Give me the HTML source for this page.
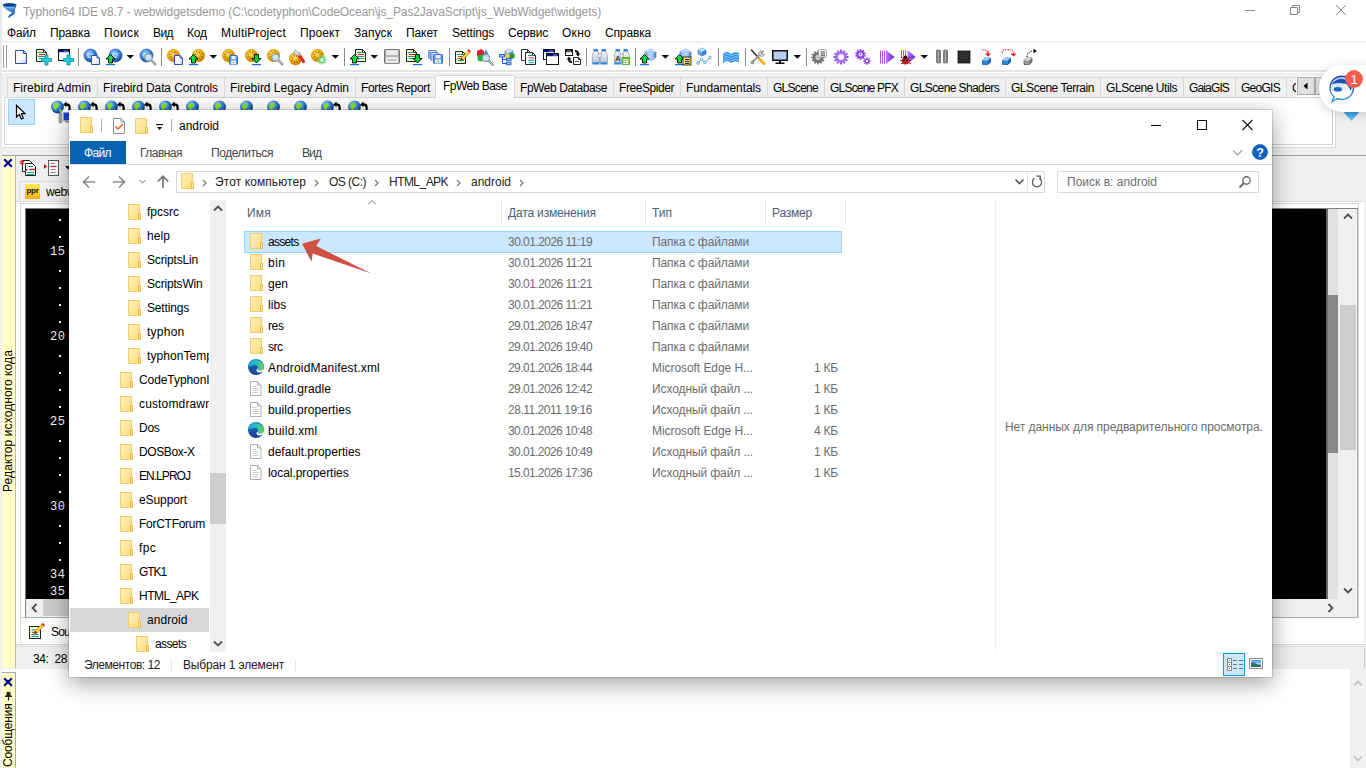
<!DOCTYPE html>
<html lang="ru"><head><meta charset="utf-8"><title>Typhon64 IDE</title>
<style>
html,body{margin:0;padding:0}
body{width:1366px;height:768px;overflow:hidden;position:relative;background:#f0f0f0;font-family:'Liberation Sans', sans-serif;font-size:12px}
div,span.t,svg{position:absolute;box-sizing:border-box}
span.t{white-space:pre}

</style></head><body>
<svg style="left:0;top:0" width="0" height="0"><defs><linearGradient id="fg" x1="0" y1="0" x2="1" y2="1"><stop offset="0" stop-color="#fff0be"/><stop offset="1" stop-color="#ffdc7c"/></linearGradient></defs><defs><linearGradient id="eg1" x1="0" y1="0" x2="1" y2="0"><stop offset="0" stop-color="#1fa0e4"/><stop offset=".55" stop-color="#2bc3b4"/><stop offset="1" stop-color="#6ad34a"/></linearGradient><linearGradient id="eg2" x1="0" y1="0" x2="0" y2="1"><stop offset="0" stop-color="#1b7fd4"/><stop offset="1" stop-color="#1a3f8c"/></linearGradient></defs></svg>
<div style="left:0px;top:0px;width:1366px;height:41px;background:#fff;"></div>
<div style="left:0px;top:41px;width:1366px;height:2px;background:#f0f0f0;"></div>
<div style="left:0px;top:43px;width:1366px;height:27px;background:#fff;"></div>
<div style="left:0px;top:70px;width:1366px;height:2px;background:#e3e3e3;"></div>
<div style="left:0px;top:72px;width:1366px;height:1px;background:#fff;"></div>
<div style="left:0px;top:0px;width:2px;height:155px;background:#e9e9e9;"></div>
<svg style="left:0;top:0" width="20" height="21" viewBox="0 0 20 21"><defs><linearGradient id="tw" x1="0" y1="0" x2="0" y2="1"><stop offset="0" stop-color="#0f4f9c"/><stop offset=".3" stop-color="#3f8ad8"/><stop offset="1" stop-color="#1a5fb4"/></linearGradient></defs><path d="M2.500 4.600Q9.500 1.800 16.500 4.600Q16.300 7.500 14.800 9.800Q15.500 12.500 14.200 14.500Q11 15.500 8.800 18Q7.300 16 10.500 14.300Q12.800 13.300 11 12Q6.500 10.300 3.800 7.200Z" fill="url(#tw)"/><ellipse cx="9.500" cy="4.800" rx="6.800" ry="1.500" fill="#0a3f8a"/><path d="M4.500 7.500h9.500M5.500 9h8" stroke="#9cc8f4" stroke-width=".6"/></svg>
<svg style="left:1240px;top:0" width="120" height="22" viewBox="1240 0 120 22"><g stroke="#8a8a8a" stroke-width="1" fill="none"><path d="M1245 10.500h10"/><path d="M1290.500 7.500h7v7h-7zM1292.500 7.500v-2h7v7h-2"/><path d="M1336 5l10 10M1346 5l-10 10"/></g></svg>
<div style="left:3px;top:45px;width:1px;height:23px;background:#a0a0a0;"></div>
<div style="left:6px;top:45px;width:1px;height:23px;background:#a0a0a0;"></div>
<svg style="left:0;top:44px" width="1060" height="26" viewBox="0 44 1060 26"><defs>
<radialGradient id="gB" cx="40%" cy="35%" r="65%"><stop offset="0" stop-color="#a9d6ff"/><stop offset=".55" stop-color="#3f8de0"/><stop offset="1" stop-color="#123f9c"/></radialGradient>
<radialGradient id="gY" cx="40%" cy="35%" r="65%"><stop offset="0" stop-color="#ffe88a"/><stop offset=".5" stop-color="#f9b90c"/><stop offset="1" stop-color="#c47e00"/></radialGradient>
<linearGradient id="gD" x1="0" y1="0" x2="1" y2="1"><stop offset="0" stop-color="#fff"/><stop offset=".6" stop-color="#f4f8ff"/><stop offset="1" stop-color="#b9cdf0"/></linearGradient>
<linearGradient id="gP" x1="0" y1="0" x2="1" y2="0"><stop offset="0" stop-color="#b680fa"/><stop offset="1" stop-color="#6a14d0"/></linearGradient>
<radialGradient id="gPg" cx="50%" cy="50%" r="60%"><stop offset="0" stop-color="#d9bdff"/><stop offset="1" stop-color="#8b45e6"/></radialGradient>
<linearGradient id="gG" x1="0" y1="0" x2="1" y2="0"><stop offset="0" stop-color="#666"/><stop offset=".5" stop-color="#a8a8a8"/><stop offset="1" stop-color="#555"/></linearGradient>
<linearGradient id="gC" x1="0" y1="0" x2="1" y2="1"><stop offset="0" stop-color="#d6ecff"/><stop offset="1" stop-color="#6aa2e8"/></linearGradient>
<linearGradient id="gBin" x1="0" y1="0" x2="0" y2="1"><stop offset="0" stop-color="#f4f7fb"/><stop offset=".6" stop-color="#d4dce8"/><stop offset="1" stop-color="#b8c4d4"/></linearGradient>
</defs><g transform="translate(14 49)"><path d="M1.5 1.5h8l3 3v10h-11z" fill="url(#gD)" stroke="#2a4fb8" stroke-width="1"/><path d="M9.5 1.5v3h3" fill="none" stroke="#2a4fb8" stroke-width="1"/></g><g transform="translate(36 49)"><path d="M0.5 0.5h7l3 3v9h-10z" fill="#fbf6cf" stroke="#222" stroke-width="1"/><path d="M7.5 0.5v3h3" fill="none" stroke="#222" stroke-width="1"/><rect x="2" y="3" width="7" height="1" fill="#159a9a"/><rect x="3" y="5" width="6" height="1" fill="#e02020"/><rect x="2" y="7" width="7" height="1" fill="#159a9a"/><rect x="3" y="9" width="6" height="1" fill="#159a9a"/><path d="M9.0 6h3v3.500h3.500v3h-3.500v3.500h-3v-3.500h-3.500v-3h3.500z" fill="#1fd0dc" stroke="#128a9a" stroke-width=".8"/></g><g transform="translate(58 49)"><rect x="0.5" y="0.5" width="11" height="11" fill="#fff" stroke="#111"/><rect x="1" y="1" width="10" height="2.2" fill="#10108a"/><rect x="8.5" y="1.6" width="1" height="1" fill="#fff"/><rect x="6.5" y="1.6" width="1" height="1" fill="#fff"/><path d="M9.0 6h3v3.500h3.500v3h-3.500v3.500h-3v-3.500h-3.500v-3h3.500z" fill="#1fd0dc" stroke="#128a9a" stroke-width=".8"/></g><rect x="78" y="48" width="1" height="18" fill="#8c8c8c"/><g transform="translate(84 49)"><circle cx="6.5" cy="6.5" r="6.5" fill="url(#gB)" stroke="#123f9c" stroke-width=".6"/><path d="M4.3 4.0q-1.5 4 1.5 4.5q3-.5 2-4.5" fill="none" stroke="#e8f4ff" stroke-width="1.1" opacity=".85"/><path d="M7.5 6.5h5.5l2.5 2.5v6.5h-8z" fill="url(#gD)" stroke="#2a4fb8" stroke-width="1"/><path d="M13.0 6.5v2.5h2.5" fill="none" stroke="#2a4fb8" stroke-width="1"/></g><g transform="translate(106 49)"><circle cx="9.5" cy="6.5" r="6.5" fill="url(#gB)" stroke="#123f9c" stroke-width=".6"/><path d="M7.3 4.0q-1.5 4 1.5 4.5q3-.5 2-4.5" fill="none" stroke="#e8f4ff" stroke-width="1.1" opacity=".85"/><path d="M4.5 5.5l4.5 4.5h-2.5v4h-4v-4h-2.5z" fill="#00e23c" stroke="#000" stroke-width=".9" stroke-linejoin="miter"/><rect x="0" y="15.0" width="9" height="1.2" fill="#1a6fe0"/></g><path d="M126.5 55h7.6l-3.8 3.8z" fill="#111"/><g transform="translate(140 49)"><circle cx="6.5" cy="6.5" r="6.5" fill="url(#gB)" stroke="#123f9c" stroke-width=".6"/><path d="M4.3 4.0q-1.5 4 1.5 4.5q3-.5 2-4.5" fill="none" stroke="#e8f4ff" stroke-width="1.1" opacity=".85"/><line x1="11.02" y1="11.02" x2="15.3" y2="15.3" stroke="#777" stroke-width="2.2" stroke-linecap="round"/><line x1="11.02" y1="11.02" x2="15.1" y2="15.1" stroke="#d8d8d8" stroke-width="1" stroke-linecap="round"/><circle cx="8.5" cy="8.5" r="3.6" fill="#c4e6f8" stroke="#8a9aa8" stroke-width="1.1"/></g><rect x="161" y="48" width="1" height="18" fill="#8c8c8c"/><g transform="translate(167 49)"><circle cx="6.5" cy="6.5" r="6.2" fill="url(#gY)" stroke="#c88a00" stroke-width=".6"/><line x1="8.6" y1="7.3" x2="10.8" y2="8.1" stroke="#7a4a00" stroke-width=".9" opacity=".8"/><line x1="7.4" y1="8.5" x2="8.4" y2="10.7" stroke="#7a4a00" stroke-width=".9" opacity=".8"/><line x1="5.7" y1="8.6" x2="4.9" y2="10.8" stroke="#7a4a00" stroke-width=".9" opacity=".8"/><line x1="4.5" y1="7.4" x2="2.3" y2="8.4" stroke="#7a4a00" stroke-width=".9" opacity=".8"/><line x1="4.4" y1="5.7" x2="2.2" y2="4.9" stroke="#7a4a00" stroke-width=".9" opacity=".8"/><line x1="5.6" y1="4.5" x2="4.6" y2="2.3" stroke="#7a4a00" stroke-width=".9" opacity=".8"/><line x1="7.3" y1="4.4" x2="8.1" y2="2.2" stroke="#7a4a00" stroke-width=".9" opacity=".8"/><line x1="8.5" y1="5.6" x2="10.7" y2="4.6" stroke="#7a4a00" stroke-width=".9" opacity=".8"/><path d="M7.5 6.5h5.5l2.5 2.5v6.5h-8z" fill="url(#gD)" stroke="#2a4fb8" stroke-width="1"/><path d="M13.0 6.5v2.5h2.5" fill="none" stroke="#2a4fb8" stroke-width="1"/></g><g transform="translate(189 49)"><circle cx="9.5" cy="6.5" r="6.2" fill="url(#gY)" stroke="#c88a00" stroke-width=".6"/><line x1="11.6" y1="7.3" x2="13.8" y2="8.1" stroke="#7a4a00" stroke-width=".9" opacity=".8"/><line x1="10.4" y1="8.5" x2="11.4" y2="10.7" stroke="#7a4a00" stroke-width=".9" opacity=".8"/><line x1="8.7" y1="8.6" x2="7.9" y2="10.8" stroke="#7a4a00" stroke-width=".9" opacity=".8"/><line x1="7.5" y1="7.4" x2="5.3" y2="8.4" stroke="#7a4a00" stroke-width=".9" opacity=".8"/><line x1="7.4" y1="5.7" x2="5.2" y2="4.9" stroke="#7a4a00" stroke-width=".9" opacity=".8"/><line x1="8.6" y1="4.5" x2="7.6" y2="2.3" stroke="#7a4a00" stroke-width=".9" opacity=".8"/><line x1="10.3" y1="4.4" x2="11.1" y2="2.2" stroke="#7a4a00" stroke-width=".9" opacity=".8"/><line x1="11.5" y1="5.6" x2="13.7" y2="4.6" stroke="#7a4a00" stroke-width=".9" opacity=".8"/><path d="M4.5 5.5l4.5 4.5h-2.5v4h-4v-4h-2.5z" fill="#00e23c" stroke="#000" stroke-width=".9" stroke-linejoin="miter"/><rect x="0" y="15.0" width="9" height="1.2" fill="#1a6fe0"/></g><path d="M209.5 55h7.6l-3.8 3.8z" fill="#111"/><g transform="translate(222 49)"><circle cx="6.5" cy="6.5" r="6.2" fill="url(#gY)" stroke="#c88a00" stroke-width=".6"/><line x1="8.6" y1="7.3" x2="10.8" y2="8.1" stroke="#7a4a00" stroke-width=".9" opacity=".8"/><line x1="7.4" y1="8.5" x2="8.4" y2="10.7" stroke="#7a4a00" stroke-width=".9" opacity=".8"/><line x1="5.7" y1="8.6" x2="4.9" y2="10.8" stroke="#7a4a00" stroke-width=".9" opacity=".8"/><line x1="4.5" y1="7.4" x2="2.3" y2="8.4" stroke="#7a4a00" stroke-width=".9" opacity=".8"/><line x1="4.4" y1="5.7" x2="2.2" y2="4.9" stroke="#7a4a00" stroke-width=".9" opacity=".8"/><line x1="5.6" y1="4.5" x2="4.6" y2="2.3" stroke="#7a4a00" stroke-width=".9" opacity=".8"/><line x1="7.3" y1="4.4" x2="8.1" y2="2.2" stroke="#7a4a00" stroke-width=".9" opacity=".8"/><line x1="8.5" y1="5.6" x2="10.7" y2="4.6" stroke="#7a4a00" stroke-width=".9" opacity=".8"/><rect x="7.5" y="6.5" width="8" height="9" rx="1" fill="#5b8fe0" stroke="#3a6cc8"/><rect x="9.5" y="7" width="4" height="3.3" fill="#e8f0ff"/><rect x="9" y="11.5" width="5" height="4.0" fill="#e8f0ff"/><rect x="10.5" y="12.8" width="2" height="1.5" fill="#9bd06a"/></g><g transform="translate(245 49)"><circle cx="6.5" cy="6.5" r="6.2" fill="url(#gY)" stroke="#c88a00" stroke-width=".6"/><line x1="8.6" y1="7.3" x2="10.8" y2="8.1" stroke="#7a4a00" stroke-width=".9" opacity=".8"/><line x1="7.4" y1="8.5" x2="8.4" y2="10.7" stroke="#7a4a00" stroke-width=".9" opacity=".8"/><line x1="5.7" y1="8.6" x2="4.9" y2="10.8" stroke="#7a4a00" stroke-width=".9" opacity=".8"/><line x1="4.5" y1="7.4" x2="2.3" y2="8.4" stroke="#7a4a00" stroke-width=".9" opacity=".8"/><line x1="4.4" y1="5.7" x2="2.2" y2="4.9" stroke="#7a4a00" stroke-width=".9" opacity=".8"/><line x1="5.6" y1="4.5" x2="4.6" y2="2.3" stroke="#7a4a00" stroke-width=".9" opacity=".8"/><line x1="7.3" y1="4.4" x2="8.1" y2="2.2" stroke="#7a4a00" stroke-width=".9" opacity=".8"/><line x1="8.5" y1="5.6" x2="10.7" y2="4.6" stroke="#7a4a00" stroke-width=".9" opacity=".8"/><path d="M9.5 5.5h4v4h2.5l-4.5 4.5l-4.5-4.5h2.5z" fill="#00d23c" stroke="#000" stroke-width=".9"/><rect x="7" y="15.0" width="9" height="1.2" fill="#1a6fe0"/></g><g transform="translate(267 49)"><circle cx="6.5" cy="6.5" r="6.2" fill="url(#gY)" stroke="#c88a00" stroke-width=".6"/><line x1="8.6" y1="7.3" x2="10.8" y2="8.1" stroke="#7a4a00" stroke-width=".9" opacity=".8"/><line x1="7.4" y1="8.5" x2="8.4" y2="10.7" stroke="#7a4a00" stroke-width=".9" opacity=".8"/><line x1="5.7" y1="8.6" x2="4.9" y2="10.8" stroke="#7a4a00" stroke-width=".9" opacity=".8"/><line x1="4.5" y1="7.4" x2="2.3" y2="8.4" stroke="#7a4a00" stroke-width=".9" opacity=".8"/><line x1="4.4" y1="5.7" x2="2.2" y2="4.9" stroke="#7a4a00" stroke-width=".9" opacity=".8"/><line x1="5.6" y1="4.5" x2="4.6" y2="2.3" stroke="#7a4a00" stroke-width=".9" opacity=".8"/><line x1="7.3" y1="4.4" x2="8.1" y2="2.2" stroke="#7a4a00" stroke-width=".9" opacity=".8"/><line x1="8.5" y1="5.6" x2="10.7" y2="4.6" stroke="#7a4a00" stroke-width=".9" opacity=".8"/><line x1="11.02" y1="11.02" x2="15.3" y2="15.3" stroke="#777" stroke-width="2.2" stroke-linecap="round"/><line x1="11.02" y1="11.02" x2="15.1" y2="15.1" stroke="#d8d8d8" stroke-width="1" stroke-linecap="round"/><circle cx="8.5" cy="8.5" r="3.6" fill="#c4e6f8" stroke="#8a9aa8" stroke-width="1.1"/></g><g transform="translate(289 49)"><circle cx="6.5" cy="9.8" r="6.2" fill="url(#gY)" stroke="#c88a00" stroke-width=".6"/><line x1="8.6" y1="10.6" x2="10.8" y2="11.4" stroke="#7a4a00" stroke-width=".9" opacity=".8"/><line x1="7.4" y1="11.8" x2="8.4" y2="14.0" stroke="#7a4a00" stroke-width=".9" opacity=".8"/><line x1="5.7" y1="11.9" x2="4.9" y2="14.1" stroke="#7a4a00" stroke-width=".9" opacity=".8"/><line x1="4.5" y1="10.7" x2="2.3" y2="11.7" stroke="#7a4a00" stroke-width=".9" opacity=".8"/><line x1="4.4" y1="9.0" x2="2.2" y2="8.2" stroke="#7a4a00" stroke-width=".9" opacity=".8"/><line x1="5.6" y1="7.8" x2="4.6" y2="5.6" stroke="#7a4a00" stroke-width=".9" opacity=".8"/><line x1="7.3" y1="7.7" x2="8.1" y2="5.5" stroke="#7a4a00" stroke-width=".9" opacity=".8"/><line x1="8.5" y1="8.9" x2="10.7" y2="7.9" stroke="#7a4a00" stroke-width=".9" opacity=".8"/><path d="M10 6l4.500 6.500" stroke="#e02828" stroke-width="3.200" stroke-linecap="round"/><path d="M8.500 3.500l2.500 3" stroke="#b8b8b8" stroke-width="2.600"/><path d="M6.500 .5a3.200 3.200 0 1 0 5 3.500l-2.200 .2-1.500-1.800z" fill="#e4e4e4" stroke="#8a8a8a" stroke-width=".7"/></g><g transform="translate(311 49)"><circle cx="6.5" cy="6.5" r="6.2" fill="url(#gY)" stroke="#c88a00" stroke-width=".6"/><line x1="8.6" y1="7.3" x2="10.8" y2="8.1" stroke="#7a4a00" stroke-width=".9" opacity=".8"/><line x1="7.4" y1="8.5" x2="8.4" y2="10.7" stroke="#7a4a00" stroke-width=".9" opacity=".8"/><line x1="5.7" y1="8.6" x2="4.9" y2="10.8" stroke="#7a4a00" stroke-width=".9" opacity=".8"/><line x1="4.5" y1="7.4" x2="2.3" y2="8.4" stroke="#7a4a00" stroke-width=".9" opacity=".8"/><line x1="4.4" y1="5.7" x2="2.2" y2="4.9" stroke="#7a4a00" stroke-width=".9" opacity=".8"/><line x1="5.6" y1="4.5" x2="4.6" y2="2.3" stroke="#7a4a00" stroke-width=".9" opacity=".8"/><line x1="7.3" y1="4.4" x2="8.1" y2="2.2" stroke="#7a4a00" stroke-width=".9" opacity=".8"/><line x1="8.5" y1="5.6" x2="10.7" y2="4.6" stroke="#7a4a00" stroke-width=".9" opacity=".8"/><rect x="10.25" y="6.30" width="1.5" height="9.40" rx=".4" fill="#6fdc7a" transform="rotate(0.0 11 11)"/><rect x="10.25" y="6.30" width="1.5" height="9.40" rx=".4" fill="#6fdc7a" transform="rotate(45.0 11 11)"/><rect x="10.25" y="6.30" width="1.5" height="9.40" rx=".4" fill="#6fdc7a" transform="rotate(90.0 11 11)"/><rect x="10.25" y="6.30" width="1.5" height="9.40" rx=".4" fill="#6fdc7a" transform="rotate(135.0 11 11)"/><circle cx="11" cy="11" r="3.4" fill="#6fdc7a" stroke="none"/><circle cx="11" cy="11" r="1.70" fill="#fff"/></g><path d="M331.5 55h7.6l-3.8 3.8z" fill="#111"/><rect x="344" y="48" width="1" height="18" fill="#8c8c8c"/><g transform="translate(350 49)"><path d="M5.5 0.5h7l3 3v9h-10z" fill="#fbf6cf" stroke="#222" stroke-width="1"/><path d="M12.5 0.5v3h3" fill="none" stroke="#222" stroke-width="1"/><rect x="7" y="3" width="7" height="1" fill="#159a9a"/><rect x="8" y="5" width="6" height="1" fill="#e02020"/><rect x="7" y="7" width="7" height="1" fill="#159a9a"/><rect x="8" y="9" width="6" height="1" fill="#159a9a"/><path d="M4.5 5.5l4.5 4.5h-2.5v4h-4v-4h-2.5z" fill="#00e23c" stroke="#000" stroke-width=".9" stroke-linejoin="miter"/><rect x="0" y="15.0" width="9" height="1.2" fill="#1a6fe0"/></g><path d="M370.5 55h7.6l-3.8 3.8z" fill="#111"/><g transform="translate(384 49)"><rect x="0.5" y="0.5" width="15" height="14" rx="1" fill="#b2b2b2" stroke="#6c6c6c"/><rect x="2.5" y="1" width="11" height="5.0" fill="#ececec"/><rect x="2" y="8.2" width="12" height="6.0" fill="#ececec"/><rect x="3.5" y="10.2" width="9" height="1.5" fill="#b8b8b8"/></g><g transform="translate(406 49)"><path d="M0.5 0.5h7l3 3v9h-10z" fill="#fbf6cf" stroke="#222" stroke-width="1"/><path d="M7.5 0.5v3h3" fill="none" stroke="#222" stroke-width="1"/><rect x="2" y="3" width="7" height="1" fill="#159a9a"/><rect x="3" y="5" width="6" height="1" fill="#e02020"/><rect x="2" y="7" width="7" height="1" fill="#159a9a"/><rect x="3" y="9" width="6" height="1" fill="#159a9a"/><path d="M9.5 5.5h4v4h2.5l-4.5 4.5l-4.5-4.5h2.5z" fill="#00d23c" stroke="#000" stroke-width=".9"/><rect x="7" y="15.0" width="9" height="1.2" fill="#1a6fe0"/></g><g transform="translate(428 49)"><rect x="0.5" y="1.5" width="8" height="8" rx="1" fill="#8fb0ea" stroke="#5f88d8"/><rect x="2.5" y="2" width="4" height="3.0" fill="#d8e4fa"/><rect x="2" y="6.0" width="5" height="3.6" fill="#d8e4fa"/><rect x="3.5" y="7.1" width="2" height="1.5" fill="#d8e4fa"/><rect x="2.5" y="3.5" width="8" height="8" rx="1" fill="#8fb0ea" stroke="#5f88d8"/><rect x="4.5" y="4" width="4" height="3.0" fill="#d8e4fa"/><rect x="4" y="8.0" width="5" height="3.6" fill="#d8e4fa"/><rect x="5.5" y="9.1" width="2" height="1.5" fill="#d8e4fa"/><rect x="5.5" y="5.5" width="9" height="9" rx="1" fill="#5b8fe0" stroke="#3a6cc8"/><rect x="7.5" y="6" width="5" height="3.3" fill="#e8f0ff"/><rect x="7" y="10.5" width="6" height="4.0" fill="#e8f0ff"/><rect x="8.5" y="11.8" width="3" height="1.5" fill="#9bd06a"/></g><rect x="449" y="48" width="1" height="18" fill="#8c8c8c"/><g transform="translate(455 49)"><path d="M0.5 2.5h7l3 3v9h-10z" fill="#fbf6cf" stroke="#222" stroke-width="1"/><path d="M7.5 2.5v3h3" fill="none" stroke="#222" stroke-width="1"/><rect x="2" y="5" width="7" height="1" fill="#159a9a"/><rect x="3" y="7" width="6" height="1" fill="#e02020"/><rect x="2" y="9" width="7" height="1" fill="#159a9a"/><rect x="3" y="11" width="6" height="1" fill="#159a9a"/><path d="M5 12l1.2-3.2 7-7 2 2-7 7z" fill="#ffd040" stroke="#b07800" stroke-width=".6"/><path d="M12.4 1.2l1.4-1.2 2.2 2.2-1.4 1.4z" fill="#e03030"/><path d="M5 12l1.2-3.2 2 2z" fill="#333"/></g><g transform="translate(477 49)"><path d="M0 2l4-2 3 2v5l-3 2-4-2z" fill="#d8242c"/><path d="M9 0l4 9h-8z" fill="#3a8ce8"/><circle cx="4" cy="9" r="3.5" fill="#20b040"/><line x1="11.52" y1="11.52" x2="15.8" y2="15.8" stroke="#777" stroke-width="2.2" stroke-linecap="round"/><line x1="11.52" y1="11.52" x2="15.6" y2="15.6" stroke="#d8d8d8" stroke-width="1" stroke-linecap="round"/><circle cx="9" cy="9" r="3.6" fill="#c4e6f8" stroke="#8a9aa8" stroke-width="1.1"/></g><g transform="translate(499 49)"><path d="M10.0 0l4.0 2.0v4.0l-4.0 2.0l-4.0-2.0v-4.0z" fill="#8db8ee" stroke="#3f6fb8" stroke-width=".6"/><path d="M10.0 0l4.0 2.0l-4.0 2.0l-4.0-2.0z" fill="#cfe6ff"/><path d="M10.0 4.0v4.0l4.0-2.0v-4.0z" fill="#5f8fd8"/><circle cx="13" cy="7" r="2.800" fill="#2a9a38"/><rect x="6.500" y="4.500" width="4" height="5.500" rx="1.500" fill="#f0d860" stroke="#b8a030" stroke-width=".5"/><path d="M3.500 8v6.500M3.500 10.500h4M3.500 14.500h4" stroke="#1a5fd0" stroke-width="1" fill="none"/><rect x=".5" y="5.500" width="5" height="2.500" fill="#9cc4f4" stroke="#1a5fd0" stroke-width=".9"/><rect x="7.500" y="9.300" width="4.500" height="2.400" fill="#9cc4f4" stroke="#1a5fd0" stroke-width=".9"/><rect x="7.500" y="13.300" width="4.500" height="2.400" fill="#9cc4f4" stroke="#1a5fd0" stroke-width=".9"/></g><g transform="translate(521 49)"><path d="M0.5 0.5h6l3 3v8h-9z" fill="#fff" stroke="#333" stroke-width="1"/><path d="M6.5 0.5v3h3" fill="none" stroke="#333" stroke-width="1"/><path d="M4.5 3.5h7l3 3v9h-10z" fill="#fff" stroke="#222" stroke-width="1"/><path d="M11.5 3.5v3h3" fill="none" stroke="#222" stroke-width="1"/><rect x="7" y="6.0" width="6" height="1" fill="#159a9a"/><rect x="8" y="8.4" width="5" height="1" fill="#e02020"/><rect x="7" y="10.8" width="6" height="1" fill="#159a9a"/><rect x="8" y="13.2" width="5" height="1" fill="#159a9a"/></g><g transform="translate(543 49)"><rect x="0.5" y="0.5" width="11" height="10" fill="#fff" stroke="#111"/><rect x="1" y="1" width="10" height="2.2" fill="#10108a"/><rect x="8.5" y="1.6" width="1" height="1" fill="#fff"/><rect x="6.5" y="1.6" width="1" height="1" fill="#fff"/><rect x="3.5" y="4.5" width="12" height="11" fill="#fff" stroke="#111"/><rect x="4" y="5" width="11" height="2.2" fill="#10108a"/><rect x="12.5" y="5.6" width="1" height="1" fill="#fff"/><rect x="10.5" y="5.6" width="1" height="1" fill="#fff"/></g><g transform="translate(565 49)"><rect x="0.5" y="0.5" width="7" height="6" fill="#fff" stroke="#111"/><rect x="1" y="1" width="6" height="2.2" fill="#222"/><rect x="4.5" y="1.6" width="1" height="1" fill="#fff"/><rect x="2.5" y="1.6" width="1" height="1" fill="#fff"/><path d="M10 1q4 0 4 3.5l1.5 0-2.5 3-2.5-3 1.5 0q0-1.5-2-1.5z" fill="#111"/><path d="M7 14q-4 0-4-3.5l-1.5 0 2.5-3 2.5 3-1.5 0q0 1.5 2 1.5z" fill="#111"/><path d="M8.5 8.5h5l2 2v5h-7z" fill="#fff" stroke="#222" stroke-width="1"/><path d="M13.5 8.5v2h2" fill="none" stroke="#222" stroke-width="1"/><rect x="10" y="12" width="4" height="1" fill="#555"/></g><rect x="586" y="48" width="1" height="18" fill="#8c8c8c"/><g transform="translate(592 49)"><rect x="1.500" y="0" width="4.500" height="2.500" fill="#2f86e8"/><rect x="9.500" y="0" width="4.500" height="2.500" fill="#2f86e8"/><path d="M1.500 2.500h4.500l1.500 4v7h-7.200v-7z" fill="url(#gBin)" stroke="#8a98ac" stroke-width=".7"/><path d="M9.500 2.500h4.500l1.500 4v7h-7.200v-7z" fill="url(#gBin)" stroke="#8a98ac" stroke-width=".7"/><rect x=".3" y="13.500" width="7.200" height="2" fill="#2f86e8"/><rect x="8.300" y="13.500" width="7.200" height="2" fill="#2f86e8"/><rect x="6" y="5" width="3.500" height="3.500" fill="#e8eef4" stroke="#8a98ac" stroke-width=".6"/></g><g transform="translate(614 49)"><rect x="1.500" y="0" width="4.500" height="2.500" fill="#2f86e8"/><rect x="9.500" y="0" width="4.500" height="2.500" fill="#2f86e8"/><path d="M1.500 2.500h4.500l1.500 4v7h-7.200v-7z" fill="url(#gBin)" stroke="#8a98ac" stroke-width=".7"/><path d="M9.500 2.500h4.500l1.500 4v7h-7.200v-7z" fill="url(#gBin)" stroke="#8a98ac" stroke-width=".7"/><rect x=".3" y="13.500" width="7.200" height="2" fill="#2f86e8"/><rect x="8.300" y="13.500" width="7.200" height="2" fill="#2f86e8"/><rect x="6" y="5" width="3.500" height="3.500" fill="#e8eef4" stroke="#8a98ac" stroke-width=".6"/><text x="4" y="12" font-size="8" font-weight="bold" font-family="Liberation Sans, sans-serif" fill="#444" text-anchor="middle">A</text><rect x="8" y="8" width="8" height="8" fill="#5cb82e"/><text x="12" y="15" font-size="8" font-weight="bold" font-family="Liberation Sans, sans-serif" fill="#fff" text-anchor="middle">B</text></g><rect x="635" y="48" width="1" height="18" fill="#8c8c8c"/><g transform="translate(640 49)"><path d="M10.5 0l5.5 2.75v5.5l-5.5 2.75l-5.5-2.75v-5.5z" fill="#8db8ee" stroke="#3f6fb8" stroke-width=".6"/><path d="M10.5 0l5.5 2.75l-5.5 2.75l-5.5-2.75z" fill="#cfe6ff"/><path d="M10.5 5.5v5.5l5.5-2.75v-5.5z" fill="#5f8fd8"/><path d="M7 3.5q3.500-2 7 0v7q-3.500 2-7 0z" fill="#b8d4f8" stroke="#5f8fd8" stroke-width=".6" opacity=".85"/><path d="M4.5 5.5l4.5 4.5h-2.5v4h-4v-4h-2.5z" fill="#00e23c" stroke="#000" stroke-width=".9" stroke-linejoin="miter"/><rect x="0" y="15.0" width="9" height="1.2" fill="#1a6fe0"/></g><path d="M661.5 55h7.6l-3.8 3.8z" fill="#111"/><g transform="translate(675 49)"><path d="M10.5 0l5.5 2.75v5.5l-5.5 2.75l-5.5-2.75v-5.5z" fill="#8db8ee" stroke="#3f6fb8" stroke-width=".6"/><path d="M10.5 0l5.5 2.75l-5.5 2.75l-5.5-2.75z" fill="#cfe6ff"/><path d="M10.5 5.5v5.5l5.5-2.75v-5.5z" fill="#5f8fd8"/><path d="M7 3.5q3.500-2 7 0v7q-3.500 2-7 0z" fill="#b8d4f8" stroke="#5f8fd8" stroke-width=".6" opacity=".85"/><path d="M4.5 5.5l4.5 4.5h-2.5v4h-4v-4h-2.5z" fill="#00e23c" stroke="#000" stroke-width=".9" stroke-linejoin="miter"/><rect x="0" y="15.0" width="9" height="1.2" fill="#1a6fe0"/><rect x="8" y="8" width="8" height="8" fill="#ffe92e" stroke="#111" stroke-width=".8"/><path d="M10 10.500h4.500M10 12.500h4.500M10 14.500h4.500" stroke="#1a1aa8" stroke-width="1"/></g><g transform="translate(696 49)"><path d="M6.0 -1l4.0 2.0v4.0l-4.0 2.0l-4.0-2.0v-4.0z" fill="#5fa8e8" stroke="#3f6fb8" stroke-width=".6"/><path d="M6.0 -1l4.0 2.0l-4.0 2.0l-4.0-2.0z" fill="#bfe0ff"/><path d="M6.0 3.0v4.0l4.0-2.0v-4.0z" fill="#3a7fd0"/><path d="M2 14l3.500-3.500 3.500 3 5-5" stroke="#3f9ae8" stroke-width="1" fill="none"/><circle cx="2" cy="14" r="1.300" fill="#fff" stroke="#3f9ae8" stroke-width=".8"/><circle cx="5.500" cy="10.500" r="1.300" fill="#fff" stroke="#3f9ae8" stroke-width=".8"/><circle cx="9" cy="13.500" r="1.300" fill="#fff" stroke="#3f9ae8" stroke-width=".8"/><circle cx="14" cy="8.500" r="1.300" fill="#fff" stroke="#3f9ae8" stroke-width=".8"/></g><rect x="718" y="48" width="1" height="18" fill="#8c8c8c"/><g transform="translate(723 49)"><path d="M0 5q4-4 8 0q4-3 8-1v9q-4-2-8 1q-4-4-8 0z" fill="#2f8ce8"/><path d="M0 7q4-4 8 0q4-3 8-1M0 9.500q4-4 8 0q4-3 8-1M0 12q4-4 8 0q4-3 8-1" stroke="#bfe0ff" stroke-width=".7" fill="none"/></g><rect x="745" y="48" width="1" height="18" fill="#8c8c8c"/><g transform="translate(750 49)"><path d="M1.500 1l9 10" stroke="#333" stroke-width="1.600" stroke-linecap="round"/><path d="M9.500 10l4.500 4.500" stroke="#f0b020" stroke-width="3" stroke-linecap="round"/><path d="M13 2.500l-11 11" stroke="#999" stroke-width="2" stroke-linecap="round"/><path d="M11 1.500a3 3 0 1 0 3.500 3.500l-2 .5-1.500-1.500z" fill="#d0d0d0" stroke="#777" stroke-width=".6"/><circle cx="2.500" cy="13.500" r="1.500" fill="#aaa" stroke="#666" stroke-width=".6"/></g><g transform="translate(772 49)"><rect x=".75" y="1.750" width="14.500" height="9.500" fill="#b5cdf0" stroke="#111" stroke-width="1.500"/><rect x="7" y="11.500" width="2" height="2.500" fill="#111"/><rect x="3.500" y="13.500" width="9" height="1.500" fill="#111"/></g><path d="M793.5 55h7.6l-3.8 3.8z" fill="#111"/><rect x="806" y="48" width="1" height="18" fill="#8c8c8c"/><g transform="translate(811 49)"><rect x="6.15" y="1.60" width="1.7" height="13.80" rx=".4" fill="#6e6e6e" transform="rotate(0.0 7 8.5)"/><rect x="6.15" y="1.60" width="1.7" height="13.80" rx=".4" fill="#6e6e6e" transform="rotate(30.0 7 8.5)"/><rect x="6.15" y="1.60" width="1.7" height="13.80" rx=".4" fill="#6e6e6e" transform="rotate(60.0 7 8.5)"/><rect x="6.15" y="1.60" width="1.7" height="13.80" rx=".4" fill="#6e6e6e" transform="rotate(90.0 7 8.5)"/><rect x="6.15" y="1.60" width="1.7" height="13.80" rx=".4" fill="#6e6e6e" transform="rotate(120.0 7 8.5)"/><rect x="6.15" y="1.60" width="1.7" height="13.80" rx=".4" fill="#6e6e6e" transform="rotate(150.0 7 8.5)"/><circle cx="7" cy="8.5" r="5.3" fill="#6e6e6e" stroke="none"/><circle cx="7" cy="8.5" r="2.65" fill="#c8c8c8"/><rect x="7.500" y=".5" width="8" height="8" rx="1.500" fill="#fff" stroke="#888" stroke-width=".7"/><path d="M9.500 3h4.500M9.500 5h4.500M9.500 6.800h4.500" stroke="#333" stroke-width=".9"/></g><g transform="translate(833 49)"><rect x="7.05" y="0.50" width="1.9" height="15.00" rx=".4" fill="url(#gPg)" transform="rotate(0.0 8 8)"/><rect x="7.05" y="0.50" width="1.9" height="15.00" rx=".4" fill="url(#gPg)" transform="rotate(30.0 8 8)"/><rect x="7.05" y="0.50" width="1.9" height="15.00" rx=".4" fill="url(#gPg)" transform="rotate(60.0 8 8)"/><rect x="7.05" y="0.50" width="1.9" height="15.00" rx=".4" fill="url(#gPg)" transform="rotate(90.0 8 8)"/><rect x="7.05" y="0.50" width="1.9" height="15.00" rx=".4" fill="url(#gPg)" transform="rotate(120.0 8 8)"/><rect x="7.05" y="0.50" width="1.9" height="15.00" rx=".4" fill="url(#gPg)" transform="rotate(150.0 8 8)"/><circle cx="8" cy="8" r="5.7" fill="url(#gPg)" stroke="none"/><circle cx="8" cy="8" r="2.85" fill="#fff"/></g><g transform="translate(855 49)"><rect x="4.70" y="0.10" width="1.6" height="10.80" rx=".4" fill="#8b45e6" transform="rotate(0.0 5.5 5.5)"/><rect x="4.70" y="0.10" width="1.6" height="10.80" rx=".4" fill="#8b45e6" transform="rotate(36.0 5.5 5.5)"/><rect x="4.70" y="0.10" width="1.6" height="10.80" rx=".4" fill="#8b45e6" transform="rotate(72.0 5.5 5.5)"/><rect x="4.70" y="0.10" width="1.6" height="10.80" rx=".4" fill="#8b45e6" transform="rotate(108.0 5.5 5.5)"/><rect x="4.70" y="0.10" width="1.6" height="10.80" rx=".4" fill="#8b45e6" transform="rotate(144.0 5.5 5.5)"/><circle cx="5.5" cy="5.5" r="4" fill="#8b45e6" stroke="none"/><circle cx="5.5" cy="5.5" r="2.00" fill="#fff"/><circle cx="5.500" cy="5.500" r="1" fill="#8b45e6"/><rect x="11.35" y="8.20" width="1.3" height="7.60" rx=".4" fill="#8b45e6" transform="rotate(0.0 12 12)"/><rect x="11.35" y="8.20" width="1.3" height="7.60" rx=".4" fill="#8b45e6" transform="rotate(45.0 12 12)"/><rect x="11.35" y="8.20" width="1.3" height="7.60" rx=".4" fill="#8b45e6" transform="rotate(90.0 12 12)"/><rect x="11.35" y="8.20" width="1.3" height="7.60" rx=".4" fill="#8b45e6" transform="rotate(135.0 12 12)"/><circle cx="12" cy="12" r="2.6" fill="#8b45e6" stroke="none"/><circle cx="12" cy="12" r="1.30" fill="#fff"/></g><g transform="translate(880 49)"><path d="M.5 1.500v13M2.500 1.500v13M4.500 1.500v13" stroke="#9a3cf0" stroke-width=".9"/><path d="M6 1l8.500 7-8.500 7z" fill="url(#gP)"/></g><g transform="translate(900 49)"><path d="M1.500 1v8M3.500 1v8M5.500 1v8" stroke="#a050f8" stroke-width=".9"/><path d="M7.500 1l8 7-8 7z" fill="url(#gP)"/><path d="M1 8l10 7M10 8l-9 7M0 11.500h11M5.500 6v3" stroke="#111" stroke-width=".8"/><ellipse cx="5.500" cy="12" rx="3.800" ry="3.600" fill="#e01818"/><circle cx="5.500" cy="8.200" r="1.800" fill="#111"/><circle cx="4" cy="11.500" r=".9" fill="#111"/><circle cx="7" cy="11.500" r=".9" fill="#111"/><circle cx="5.500" cy="14" r=".8" fill="#111"/></g><path d="M920.5 55h7.6l-3.8 3.8z" fill="#111"/><g transform="translate(936 49)"><rect x=".5" y="1" width="4" height="13" rx="1" fill="url(#gG)" stroke="#555" stroke-width=".6"/><rect x="7.500" y="1" width="4" height="13" rx="1" fill="url(#gG)" stroke="#555" stroke-width=".6"/></g><g transform="translate(958 49)"><rect x="0" y="2" width="12" height="12" fill="#2e2e2e" stroke="#111" stroke-width=".8"/></g><g transform="translate(981 49)"><path d="M1 1q5-1 6 4" stroke="#f01818" stroke-width="1.200" stroke-dasharray="1.200 1.200" fill="none"/><path d="M4 4.500h6l-3 3z" fill="#f01818"/><path d="M7 2v3" stroke="#f01818" stroke-width="1.200"/><path d="M1.5 11.5l2.5-2.5h5.5v4l-2.5 2.5h-5.5z" fill="#2f86d8" stroke="#1a5fb0" stroke-width=".8"/><path d="M1.5 11.5l2.5-2.5h5.5l-2.5 2.5z" fill="#9fd0f8"/><path d="M7.0 11.5l2.5-2.5v4l-2.5 2.5z" fill="#1a5fb0"/></g><g transform="translate(1001 49)"><path d="M1 4q1-4 6-3.500q5 0 6 4" stroke="#f01818" stroke-width="1.200" stroke-dasharray="1.200 1.200" fill="none"/><path d="M9.500 4.500h6l-3 3z" fill="#f01818"/><path d="M1.5 11.5l2.5-2.5h5.5v4l-2.5 2.5h-5.5z" fill="#2f86d8" stroke="#1a5fb0" stroke-width=".8"/><path d="M1.5 11.5l2.5-2.5h5.5l-2.5 2.5z" fill="#9fd0f8"/><path d="M7.0 11.5l2.5-2.5v4l-2.5 2.5z" fill="#1a5fb0"/></g><g transform="translate(1024 49)"><path d="M3 8q0-6 7-6" stroke="#222" stroke-width="1.200" stroke-dasharray="1.200 1.200" fill="none"/><path d="M9.500 -.5l3.500 2.500-3.500 2.500z" fill="#222"/><path d="M0 11.5l2.5-2.5h5.5v4l-2.5 2.5h-5.5z" fill="#9a9a9a" stroke="#555" stroke-width=".8"/><path d="M0 11.5l2.5-2.5h5.5l-2.5 2.5z" fill="#d8d8d8"/><path d="M5.5 11.5l2.5-2.5v4l-2.5 2.5z" fill="#707070"/></g></svg>
<div style="left:7px;top:77px;width:91px;height:21px;background:#f0f0f0;border:1px solid #d9d9d9;"></div>
<div style="left:97px;top:77px;width:128px;height:21px;background:#f0f0f0;border:1px solid #d9d9d9;"></div>
<div style="left:224px;top:77px;width:132px;height:21px;background:#f0f0f0;border:1px solid #d9d9d9;"></div>
<div style="left:355px;top:77px;width:82px;height:21px;background:#f0f0f0;border:1px solid #d9d9d9;"></div>
<div style="left:435px;top:75px;width:80px;height:24px;background:#fff;border:1px solid #d9d9d9;border-bottom:none;"></div>
<div style="left:514px;top:77px;width:100px;height:21px;background:#f0f0f0;border:1px solid #d9d9d9;"></div>
<div style="left:613px;top:77px;width:68px;height:21px;background:#f0f0f0;border:1px solid #d9d9d9;"></div>
<div style="left:680px;top:77px;width:88px;height:21px;background:#f0f0f0;border:1px solid #d9d9d9;"></div>
<div style="left:767px;top:77px;width:58px;height:21px;background:#f0f0f0;border:1px solid #d9d9d9;"></div>
<div style="left:824px;top:77px;width:81px;height:21px;background:#f0f0f0;border:1px solid #d9d9d9;"></div>
<div style="left:904px;top:77px;width:102px;height:21px;background:#f0f0f0;border:1px solid #d9d9d9;"></div>
<div style="left:1005px;top:77px;width:96px;height:21px;background:#f0f0f0;border:1px solid #d9d9d9;"></div>
<div style="left:1100px;top:77px;width:84px;height:21px;background:#f0f0f0;border:1px solid #d9d9d9;"></div>
<div style="left:1183px;top:77px;width:53px;height:21px;background:#f0f0f0;border:1px solid #d9d9d9;"></div>
<div style="left:1235px;top:77px;width:52px;height:21px;background:#f0f0f0;border:1px solid #d9d9d9;"></div>
<div style="left:1286px;top:77px;width:15px;height:21px;background:#f0f0f0;border:1px solid #d9d9d9;"></div>
<span class="t" style="left:23px;top:3.8px;font-size:12px;line-height:16px;color:#999;letter-spacing:-0.1px;">Typhon64 IDE v8.7 - webwidgetsdemo (C:\codetyphon\CodeOcean\js_Pas2JavaScript\js_WebWidget\widgets)</span>
<span class="t" style="left:7px;top:24.8px;font-size:12px;line-height:16px;color:#000;letter-spacing:-0.13px;">Файл</span>
<span class="t" style="left:50px;top:24.8px;font-size:12px;line-height:16px;color:#000;letter-spacing:-0.09px;">Правка</span>
<span class="t" style="left:104px;top:24.8px;font-size:12px;line-height:16px;color:#000;letter-spacing:0.35px;">Поиск</span>
<span class="t" style="left:153px;top:24.8px;font-size:12px;line-height:16px;color:#000;letter-spacing:-0.57px;">Вид</span>
<span class="t" style="left:187px;top:24.8px;font-size:12px;line-height:16px;color:#000;letter-spacing:-0.14px;">Код</span>
<span class="t" style="left:221px;top:24.8px;font-size:12px;line-height:16px;color:#000;letter-spacing:0.19px;">MultiProject</span>
<span class="t" style="left:300px;top:24.8px;font-size:12px;line-height:16px;color:#000;letter-spacing:0.08px;">Проект</span>
<span class="t" style="left:354px;top:24.8px;font-size:12px;line-height:16px;color:#000;letter-spacing:0.08px;">Запуск</span>
<span class="t" style="left:406px;top:24.8px;font-size:12px;line-height:16px;color:#000;letter-spacing:-0.09px;">Пакет</span>
<span class="t" style="left:452px;top:24.8px;font-size:12px;line-height:16px;color:#000;letter-spacing:-0.17px;">Settings</span>
<span class="t" style="left:508px;top:24.8px;font-size:12px;line-height:16px;color:#000;letter-spacing:-0.18px;">Сервис</span>
<span class="t" style="left:562px;top:24.8px;font-size:12px;line-height:16px;color:#000;letter-spacing:0.28px;">Окно</span>
<span class="t" style="left:605px;top:24.8px;font-size:12px;line-height:16px;color:#000;letter-spacing:-0.15px;">Справка</span>
<span class="t" style="left:13px;top:79.8px;font-size:12px;line-height:16px;color:#000;letter-spacing:0.04px;">Firebird Admin</span>
<span class="t" style="left:103px;top:79.8px;font-size:12px;line-height:16px;color:#000;letter-spacing:-0.11px;">Firebird Data Controls</span>
<span class="t" style="left:230px;top:79.8px;font-size:12px;line-height:16px;color:#000;letter-spacing:-0.02px;">Firebird Legacy Admin</span>
<span class="t" style="left:361px;top:79.8px;font-size:12px;line-height:16px;color:#000;letter-spacing:-0.34px;">Fortes Report</span>
<span class="t" style="left:443px;top:77.8px;font-size:12px;line-height:16px;color:#000;letter-spacing:-0.52px;">FpWeb Base</span>
<span class="t" style="left:520px;top:79.8px;font-size:12px;line-height:16px;color:#000;letter-spacing:-0.44px;">FpWeb Database</span>
<span class="t" style="left:619px;top:79.8px;font-size:12px;line-height:16px;color:#000;letter-spacing:-0.44px;">FreeSpider</span>
<span class="t" style="left:686px;top:79.8px;font-size:12px;line-height:16px;color:#000;letter-spacing:-0.09px;">Fundamentals</span>
<span class="t" style="left:773px;top:79.8px;font-size:12px;line-height:16px;color:#000;letter-spacing:-0.72px;">GLScene</span>
<span class="t" style="left:830px;top:79.8px;font-size:12px;line-height:16px;color:#000;letter-spacing:-0.79px;">GLScene PFX</span>
<span class="t" style="left:910px;top:79.8px;font-size:12px;line-height:16px;color:#000;letter-spacing:-0.6px;">GLScene Shaders</span>
<span class="t" style="left:1011px;top:79.8px;font-size:12px;line-height:16px;color:#000;letter-spacing:-0.46px;">GLScene Terrain</span>
<span class="t" style="left:1106px;top:79.8px;font-size:12px;line-height:16px;color:#000;letter-spacing:-0.44px;">GLScene Utils</span>
<span class="t" style="left:1189px;top:79.8px;font-size:12px;line-height:16px;color:#000;letter-spacing:-0.86px;">GaiaGIS</span>
<span class="t" style="left:1241px;top:79.8px;font-size:12px;line-height:16px;color:#000;letter-spacing:-0.73px;">GeoGIS</span>
<span class="t" style="left:1292px;top:79.8px;font-size:12px;line-height:16px;color:#000;">G</span>
<div style="left:2px;top:97px;width:1334px;height:51px;background:#fff;"></div>
<div style="left:2px;top:147px;width:1334px;height:1px;background:#dcdcdc;"></div>
<div style="left:1335px;top:97px;width:1px;height:51px;background:#dcdcdc;"></div>
<div style="left:4px;top:97px;width:1329px;height:48px;background:#fff;border:1px solid #d4d4d4;"></div>
<div style="left:436px;top:97px;width:78px;height:1px;background:#fff;"></div>
<div style="left:8px;top:99px;width:27px;height:26px;background:#cce8ff;border:1px solid #99d1ff;"></div>
<svg style="left:15px;top:104px" width="12" height="17" viewBox="0 0 12 17"><path d="M1.500 1.500v11.500l2.800-2.600 2 4.600 2-.9-2-4.500h3.700z" fill="#fff" stroke="#000" stroke-width="1.200" stroke-linejoin="miter"/></svg>
<svg style="left:48px;top:98px" width="330" height="28" viewBox="48 98 330 28"><defs><radialGradient id="gE" cx="38%" cy="32%" r="70%"><stop offset="0" stop-color="#bfe6ff"/><stop offset=".5" stop-color="#2f86e0"/><stop offset="1" stop-color="#0b2f80"/></radialGradient></defs><circle cx="57.5" cy="107" r="6.400" fill="url(#gE)"/><path d="M54.5 104q2-2 4 0q1 2-1 3.500q-2 .5-1 3q-3-1-3.500-3.500q0-2 1.500-3z" fill="#8ee01f"/><path d="M59.5 109q2 0 2.500 2q-1 1.500-2.500 .5z" fill="#8ee01f"/><path d="M68.5 110.500v-3q0-2-2-2v1.800l-3.300-2.900 3.300-2.900v1.800q4.200 0 4.200 4.200v3z" fill="#000"/><circle cx="84.5" cy="107" r="6.400" fill="url(#gE)"/><path d="M81.5 104q2-2 4 0q1 2-1 3.500q-2 .5-1 3q-3-1-3.500-3.500q0-2 1.500-3z" fill="#8ee01f"/><path d="M86.5 109q2 0 2.500 2q-1 1.500-2.500 .5z" fill="#8ee01f"/><path d="M95.5 110.500v-3q0-2-2-2v1.800l-3.300-2.900 3.300-2.900v1.800q4.200 0 4.200 4.200v3z" fill="#000"/><circle cx="111.5" cy="107" r="6.400" fill="url(#gE)"/><path d="M108.5 104q2-2 4 0q1 2-1 3.500q-2 .5-1 3q-3-1-3.500-3.500q0-2 1.500-3z" fill="#8ee01f"/><path d="M113.5 109q2 0 2.500 2q-1 1.500-2.500 .5z" fill="#8ee01f"/><path d="M122.5 110.500v-3q0-2-2-2v1.800l-3.300-2.900 3.300-2.900v1.800q4.200 0 4.200 4.200v3z" fill="#000"/><circle cx="138.5" cy="107" r="6.400" fill="url(#gE)"/><path d="M135.5 104q2-2 4 0q1 2-1 3.500q-2 .5-1 3q-3-1-3.500-3.500q0-2 1.500-3z" fill="#8ee01f"/><path d="M140.5 109q2 0 2.500 2q-1 1.500-2.500 .5z" fill="#8ee01f"/><path d="M149.5 110.500v-3q0-2-2-2v1.800l-3.300-2.900 3.300-2.900v1.800q4.200 0 4.200 4.200v3z" fill="#000"/><circle cx="165.5" cy="107" r="6.400" fill="url(#gE)"/><path d="M162.5 104q2-2 4 0q1 2-1 3.500q-2 .5-1 3q-3-1-3.500-3.500q0-2 1.500-3z" fill="#8ee01f"/><path d="M167.5 109q2 0 2.500 2q-1 1.500-2.500 .5z" fill="#8ee01f"/><path d="M176.5 110.500v-3q0-2-2-2v1.800l-3.300-2.900 3.300-2.900v1.800q4.200 0 4.200 4.200v3z" fill="#000"/><circle cx="192.5" cy="107" r="6.400" fill="url(#gE)"/><path d="M189.5 104q2-2 4 0q1 2-1 3.500q-2 .5-1 3q-3-1-3.500-3.500q0-2 1.500-3z" fill="#8ee01f"/><path d="M194.5 109q2 0 2.500 2q-1 1.500-2.500 .5z" fill="#8ee01f"/><circle cx="219.5" cy="107" r="6.400" fill="url(#gE)"/><path d="M216.5 104q2-2 4 0q1 2-1 3.500q-2 .5-1 3q-3-1-3.500-3.500q0-2 1.500-3z" fill="#8ee01f"/><path d="M221.5 109q2 0 2.500 2q-1 1.500-2.500 .5z" fill="#8ee01f"/><circle cx="246.5" cy="107" r="6.400" fill="url(#gE)"/><path d="M243.5 104q2-2 4 0q1 2-1 3.500q-2 .5-1 3q-3-1-3.500-3.500q0-2 1.500-3z" fill="#8ee01f"/><path d="M248.5 109q2 0 2.500 2q-1 1.500-2.500 .5z" fill="#8ee01f"/><circle cx="273.5" cy="107" r="6.400" fill="url(#gE)"/><path d="M270.5 104q2-2 4 0q1 2-1 3.500q-2 .5-1 3q-3-1-3.500-3.500q0-2 1.500-3z" fill="#8ee01f"/><path d="M275.5 109q2 0 2.500 2q-1 1.500-2.500 .5z" fill="#8ee01f"/><circle cx="300.5" cy="107" r="6.400" fill="url(#gE)"/><path d="M297.5 104q2-2 4 0q1 2-1 3.500q-2 .5-1 3q-3-1-3.500-3.500q0-2 1.500-3z" fill="#8ee01f"/><path d="M302.5 109q2 0 2.500 2q-1 1.500-2.500 .5z" fill="#8ee01f"/><circle cx="327.5" cy="107" r="6.400" fill="url(#gE)"/><path d="M324.5 104q2-2 4 0q1 2-1 3.500q-2 .5-1 3q-3-1-3.500-3.500q0-2 1.500-3z" fill="#8ee01f"/><path d="M329.5 109q2 0 2.500 2q-1 1.500-2.500 .5z" fill="#8ee01f"/><path d="M338.5 110.500v-3q0-2-2-2v1.800l-3.300-2.900 3.300-2.900v1.800q4.200 0 4.200 4.200v3z" fill="#000"/><circle cx="354.5" cy="107" r="6.400" fill="url(#gE)"/><path d="M351.5 104q2-2 4 0q1 2-1 3.500q-2 .5-1 3q-3-1-3.500-3.500q0-2 1.500-3z" fill="#8ee01f"/><path d="M356.5 109q2 0 2.500 2q-1 1.500-2.500 .5z" fill="#8ee01f"/><path d="M365.5 110.500v-3q0-2-2-2v1.800l-3.300-2.900 3.300-2.900v1.800q4.200 0 4.200 4.200v3z" fill="#000"/><rect x="59" y="113" width="3" height="10" fill="#a8a8a8" stroke="#777" stroke-width=".5"/><rect x="63.500" y="112.500" width="9" height="8" fill="#1a3fd8" stroke="#9aa" stroke-width=".8"/><rect x="65" y="121" width="6" height="1.500" fill="#888"/></svg>
<div style="left:1296px;top:76px;width:37px;height:21px;background:#fff;"></div>
<div style="left:1297px;top:77px;width:18px;height:18px;background:#e1e1e1;border:1px solid #adadad;"></div>
<div style="left:1315px;top:77px;width:18px;height:18px;background:#e1e1e1;border:1px solid #adadad;"></div>
<svg style="left:1302px;top:82px" width="8" height="9" viewBox="0 0 8 9"><path d="M5.500 .5v7l-4-3.500z" fill="#000"/></svg>
<svg style="left:1340px;top:104px" width="24" height="18" viewBox="0 0 24 18"><defs><linearGradient id="bt" x1="0" y1="0" x2="0" y2="1"><stop offset="0" stop-color="#1a7fd0"/><stop offset="1" stop-color="#6fd0f4"/></linearGradient></defs><path d="M0 4h23l-11.500 13z" fill="url(#bt)"/></svg>

<div style="left:2px;top:155px;width:1364px;height:1px;background:#a0a0a0;"></div>
<div style="left:2px;top:156px;width:14px;height:512px;background:#ffffc6;"></div>
<div style="left:15px;top:156px;width:1px;height:512px;background:#b8b8b8;"></div>
<div style="left:3px;top:158px;width:10px;height:10px;background:#fff;"></div>
<svg style="left:3px;top:158px" width="10" height="10" viewBox="0 0 10 10"><path d="M1.200 1.200l7.600 7.600M8.800 1.200l-7.600 7.600" stroke="#000080" stroke-width="2.300"/></svg>
<svg style="left:19px;top:159px" width="55" height="18" viewBox="19 159 55 18"><path d="M22.500 160.500h7l3 3v8h-10z" fill="#fff" stroke="#222"/><path d="M25.500 163.500h7l3 3v9h-10z" fill="#fff" stroke="#222"/><path d="M28 166.500h5M27 172.500h7M27 174.500h7" stroke="#159a9a" stroke-width="1"/><path d="M29 169.500h6" stroke="#e02020" stroke-width="1.400"/><rect x="26" y="169" width="1.500" height="1.500" fill="#10108a"/><path d="M22 160v5M19.800 161.300l4.400 2.400M24.200 161.300l-4.400 2.400" stroke="#e02020" stroke-width="1.100"/><rect x="48.500" y="160.500" width="10" height="15" fill="#fff" stroke="#555"/><path d="M50.500 163.500h4M50.500 169.500h5M50.500 172.500h5" stroke="#888" stroke-width="1"/><path d="M50.500 166.500h6" stroke="#e02020" stroke-width="1.200"/><path d="M44 164v5l3-2.500z" fill="#d01010"/><path d="M65 166h6l-3 3.500z" fill="#111"/></svg>
<div style="left:19px;top:181px;width:140px;height:21px;background:#f0f0f0;border:1px solid #dcdcdc;border-bottom:none;"></div>
<svg style="left:25px;top:184px" width="15" height="15" viewBox="0 0 15 15"><defs><linearGradient id="pp" x1="0" y1="0" x2="0" y2="1"><stop offset="0" stop-color="#ffec60"/><stop offset="1" stop-color="#ffb000"/></linearGradient></defs><rect width="15" height="15" fill="url(#pp)"/><text x="7.500" y="8.500" font-size="8" font-weight="bold" font-family="Liberation Sans, sans-serif" text-anchor="middle" fill="#111" letter-spacing="-.3">ppr</text></svg>
<div style="left:16px;top:202px;width:1348px;height:416px;background:#fff;"></div>
<div style="left:16px;top:201px;width:1348px;height:1px;background:#dcdcdc;"></div>
<div style="left:20px;top:203px;width:1339px;height:415px;background:#fff;border:1px solid #d4d4d4;"></div>
<div style="left:25px;top:208px;width:1333px;height:410px;background:#f0f0f0;border:1px solid #828282;border-right-color:#b0b0b0;border-bottom-color:#b0b0b0;"></div>
<div style="left:26px;top:209px;width:1300px;height:390px;background:#000;"></div>
<div style="left:1326px;top:209px;width:2px;height:390px;background:#6a6a6a;"></div>
<div style="left:1328px;top:209px;width:10px;height:390px;background:#e1e1e1;"></div>
<div style="left:1328px;top:295px;width:10px;height:158px;background:#888;"></div>
<div style="left:1338px;top:209px;width:2px;height:390px;background:#f0f0f0;"></div>
<div style="left:1340px;top:305px;width:16px;height:145px;background:#cdcdcd;"></div>
<div style="left:43px;top:599px;width:1150px;height:17px;background:#cdcdcd;"></div>
<svg style="left:1342px;top:212px" width="12" height="8" viewBox="0 0 12 8"><path d="M2 6.500l4-4 4 4" fill="none" stroke="#505050" stroke-width="1.800"/></svg>
<svg style="left:1342px;top:587px" width="12" height="8" viewBox="0 0 12 8"><path d="M2 1.500l4 4 4-4" fill="none" stroke="#505050" stroke-width="1.800"/></svg>
<svg style="left:30px;top:602px" width="8" height="12" viewBox="0 0 8 12"><path d="M6.500 2l-4 4 4 4" fill="none" stroke="#505050" stroke-width="1.800"/></svg>
<svg style="left:1327px;top:602px" width="8" height="12" viewBox="0 0 8 12"><path d="M1.500 2l4 4-4 4" fill="none" stroke="#505050" stroke-width="1.800"/></svg>
<div style="left:16px;top:618px;width:1348px;height:27px;background:#fff;"></div>
<div style="left:20px;top:618px;width:1px;height:25px;background:#dcdcdc;"></div>
<div style="left:16px;top:644px;width:1350px;height:1px;background:#d8d8d8;"></div>
<div style="left:16px;top:645px;width:1350px;height:24px;background:#f0f0f0;"></div>
<div style="left:16px;top:646px;width:1350px;height:1px;background:#e2e2e2;"></div>
<div style="left:1364px;top:648px;width:1px;height:20px;background:#c8c8c8;"></div>
<svg style="left:29px;top:622px" width="17" height="18" viewBox="0 0 17 18"><rect x=".5" y="4.500" width="11" height="12" fill="#fbf6cf" stroke="#222"/><path d="M2.500 8h6M2.500 12.500h7M2.500 14.500h7" stroke="#159a9a"/><path d="M3 10.300h4" stroke="#e02020"/><path d="M5 12l1.200-3.200 7-7 2 2-7 7z" fill="#ffd040" stroke="#b07800" stroke-width=".6"/><path d="M12.400 2.200l1.400-1.400 2.200 2.200-1.400 1.400z" fill="#e03030"/><path d="M5 12l1.200-3.200 2 2z" fill="#333"/></svg>
<div style="left:0px;top:669px;width:1366px;height:99px;background:#fff;"></div>
<div style="left:0px;top:669px;width:2px;height:99px;background:#f0f0f0;"></div>
<div style="left:2px;top:672px;width:14px;height:97px;background:#ffffc6;border:1px solid #a8a8a8;border-left:none;"></div>
<div style="left:1350px;top:669px;width:16px;height:99px;background:#f0f0f0;"></div>
<svg style="left:1352px;top:679px" width="12" height="8" viewBox="0 0 12 8"><path d="M2 6.500l4-4 4 4" fill="none" stroke="#c0c0c0" stroke-width="1.600"/></svg>
<svg style="left:1352px;top:755px" width="12" height="8" viewBox="0 0 12 8"><path d="M2 1.500l4 4 4-4" fill="none" stroke="#c0c0c0" stroke-width="1.600"/></svg>
<svg style="left:3px;top:677px" width="10" height="10" viewBox="0 0 10 10"><path d="M1.200 1.200l7.600 7.600M8.800 1.200l-7.600 7.600" stroke="#000080" stroke-width="2.300"/></svg>
<svg style="left:4px;top:692px" width="9" height="9" viewBox="0 0 9 9"><path d="M2.500 0h4v3.500h1.500v1.500h-7v-1.500h1.500z" fill="#222"/><path d="M4.500 5v3.500" stroke="#222" stroke-width="1.200"/></svg>
<div style="left:59px;top:219px;width:2px;height:2px;background:#fff;"></div>
<div style="left:59px;top:236px;width:2px;height:2px;background:#fff;"></div>
<div style="left:59px;top:270px;width:2px;height:2px;background:#fff;"></div>
<div style="left:59px;top:287px;width:2px;height:2px;background:#fff;"></div>
<div style="left:59px;top:304px;width:2px;height:2px;background:#fff;"></div>
<div style="left:59px;top:321px;width:2px;height:2px;background:#fff;"></div>
<div style="left:59px;top:355px;width:2px;height:2px;background:#fff;"></div>
<div style="left:59px;top:372px;width:2px;height:2px;background:#fff;"></div>
<div style="left:59px;top:389px;width:2px;height:2px;background:#fff;"></div>
<div style="left:59px;top:406px;width:2px;height:2px;background:#fff;"></div>
<div style="left:59px;top:440px;width:2px;height:2px;background:#fff;"></div>
<div style="left:59px;top:457px;width:2px;height:2px;background:#fff;"></div>
<div style="left:59px;top:474px;width:2px;height:2px;background:#fff;"></div>
<div style="left:59px;top:491px;width:2px;height:2px;background:#fff;"></div>
<div style="left:59px;top:525px;width:2px;height:2px;background:#fff;"></div>
<div style="left:59px;top:542px;width:2px;height:2px;background:#fff;"></div>
<div style="left:59px;top:559px;width:2px;height:2px;background:#fff;"></div>
<span class="t" style="left:2px;top:492px;font-size:12px;line-height:12px;color:#000;transform-origin:0 0;transform:rotate(-90deg);letter-spacing:0.09px;">Редактор исходного кода</span>
<span class="t" style="left:2px;top:767px;font-size:12px;line-height:12px;color:#000;transform-origin:0 0;transform:rotate(-90deg);letter-spacing:-0.18px;">Сообщения</span>
<span class="t" style="left:50px;top:243.8px;font-size:12px;line-height:16px;color:#fff;font-family:'Liberation Mono', monospace;letter-spacing:.5px;">15</span>
<span class="t" style="left:50px;top:328.8px;font-size:12px;line-height:16px;color:#fff;font-family:'Liberation Mono', monospace;letter-spacing:.5px;">20</span>
<span class="t" style="left:50px;top:413.8px;font-size:12px;line-height:16px;color:#fff;font-family:'Liberation Mono', monospace;letter-spacing:.5px;">25</span>
<span class="t" style="left:50px;top:498.8px;font-size:12px;line-height:16px;color:#fff;font-family:'Liberation Mono', monospace;letter-spacing:.5px;">30</span>
<span class="t" style="left:50px;top:566.8px;font-size:12px;line-height:16px;color:#fff;font-family:'Liberation Mono', monospace;letter-spacing:.5px;">34</span>
<span class="t" style="left:50px;top:583.8px;font-size:12px;line-height:16px;color:#fff;font-family:'Liberation Mono', monospace;letter-spacing:.5px;">35</span>
<span class="t" style="left:33px;top:650.8px;font-size:12px;line-height:16px;color:#000;letter-spacing:-0.39px;">34:  28</span>
<span class="t" style="left:51px;top:623.8px;font-size:12px;line-height:16px;color:#000;letter-spacing:-0.79px;">Sou</span>
<span class="t" style="left:46px;top:183.8px;font-size:12px;line-height:16px;color:#000;letter-spacing:-0.42px;">webw</span>
<div style="left:69px;top:110px;width:1203px;height:567px;background:#fff;box-shadow:0 6px 22px rgba(0,0,0,.38),0 0 0 1px rgba(0,0,0,.12);"></div>
<div style="left:70px;top:141px;width:56px;height:23px;background:#0563b2;"></div>
<div style="left:70px;top:164px;width:1202px;height:1px;background:#dadbdc;"></div>
<svg style="left:80px;top:117px" width="13" height="16" viewBox="0 0 13 16"><path d="M.5 .5h11v15h-11z" fill="url(#fg)" stroke="#f3cd6a" stroke-width="1"/><path d="M10.500 9.500h2v6h-2z" fill="#ffe9a6" stroke="#ecbc44" stroke-width="1"/></svg>
<svg style="left:135px;top:118px" width="13" height="16" viewBox="0 0 13 16"><path d="M.5 .5h11v15h-11z" fill="url(#fg)" stroke="#f3cd6a" stroke-width="1"/><path d="M10.500 9.500h2v6h-2z" fill="#ffe9a6" stroke="#ecbc44" stroke-width="1"/></svg>
<div style="left:101px;top:119px;width:1px;height:13px;background:#b4b4b4;"></div>
<div style="left:171px;top:119px;width:1px;height:13px;background:#b4b4b4;"></div>
<svg style="left:112px;top:117px" width="14" height="18" viewBox="0 0 14 18"><path d="M1.500 1.500h7.500l3.500 3.500v11.500h-11z" fill="#fff" stroke="#8c8c8c"/><path d="M9 1.500v3.500h3.500" fill="none" stroke="#8c8c8c"/><path d="M3.300 9.400l2.700 2.700 5-5.200" fill="none" stroke="#f05a28" stroke-width="1.400"/></svg>
<svg style="left:156px;top:123px" width="8" height="8" viewBox="0 0 8 8"><rect x="0" y="1" width="7" height="1.200" fill="#111"/><path d="M1 4h5.200l-2.600 3z" fill="#111"/></svg>
<svg style="left:1150px;top:118px" width="106" height="14" viewBox="0 0 106 14"><g stroke="#111" stroke-width="1.100" fill="none"><path d="M1 7.500h10"/><path d="M47.500 2.500h9v9h-9z"/><path d="M92.500 2l10 10M102.500 2l-10 10"/></g></svg>
<svg style="left:1232px;top:149px" width="12" height="8" viewBox="0 0 12 8"><path d="M1 1.500l4.500 4.500 4.500-4.500" fill="none" stroke="#9a9a9a" stroke-width="1.100"/></svg>
<svg style="left:1252px;top:144px" width="17" height="17" viewBox="0 0 17 17"><circle cx="8" cy="8" r="7.600" fill="#0f62c4" stroke="#0a4fa8" stroke-width=".6"/><text x="8" y="12.500" font-size="12.500" font-weight="bold" font-family="Liberation Sans, sans-serif" fill="#fff" text-anchor="middle">?</text></svg>
<svg style="left:80px;top:173px" width="95" height="18" viewBox="80 173 95 18"><g fill="none" stroke-width="1.700"><path d="M95 182h-11.500M89 176.500l-5.500 5.500 5.500 5.500" stroke="#8a8a8a"/><path d="M113 182h11.500M119 176.500l5.500 5.500-5.500 5.500" stroke="#8a8a8a"/><path d="M139.500 180l3 3 3-3" stroke="#a8a8a8" stroke-width="1.200"/><path d="M163 188v-11.500M157.800 181.500l5.200-5.200 5.200 5.200" stroke="#767676"/></g></svg>
<div style="left:176px;top:171px;width:869px;height:22px;background:#fff;border:1px solid #d9d9d9;"></div>
<div style="left:1027px;top:172px;width:1px;height:20px;background:#e5e5e5;"></div>
<div style="left:1057px;top:171px;width:202px;height:22px;background:#fff;border:1px solid #d9d9d9;"></div>
<svg style="left:181px;top:173px" width="13" height="16" viewBox="0 0 13 16"><path d="M.5 .5h11v15h-11z" fill="url(#fg)" stroke="#f3cd6a" stroke-width="1"/><path d="M10.500 9.500h2v6h-2z" fill="#ffe9a6" stroke="#ecbc44" stroke-width="1"/></svg>
<svg style="left:201px;top:177.5px" width="7" height="10" viewBox="0 0 7 10"><path d="M2 2l3 3-3 3" fill="none" stroke="#7a7a7a" stroke-width="1.3"/></svg>
<svg style="left:313px;top:177.5px" width="7" height="10" viewBox="0 0 7 10"><path d="M2 2l3 3-3 3" fill="none" stroke="#7a7a7a" stroke-width="1.3"/></svg>
<svg style="left:373px;top:177.5px" width="7" height="10" viewBox="0 0 7 10"><path d="M2 2l3 3-3 3" fill="none" stroke="#7a7a7a" stroke-width="1.3"/></svg>
<svg style="left:455px;top:177.5px" width="7" height="10" viewBox="0 0 7 10"><path d="M2 2l3 3-3 3" fill="none" stroke="#7a7a7a" stroke-width="1.3"/></svg>
<svg style="left:518px;top:177.5px" width="7" height="10" viewBox="0 0 7 10"><path d="M2 2l3 3-3 3" fill="none" stroke="#7a7a7a" stroke-width="1.3"/></svg>
<svg style="left:1014px;top:178px" width="12" height="9" viewBox="0 0 12 9"><path d="M1.500 1.500l4 4 4-4" fill="none" stroke="#555" stroke-width="1.600"/></svg>
<svg style="left:1030px;top:175px" width="14" height="15" viewBox="0 0 14 15"><path d="M9.600 3.400a4.600 4.600 0 1 1-5.200 0" fill="none" stroke="#5f5f5f" stroke-width="1.300"/><path d="M6.300 1.200h4v4" fill="none" stroke="#5f5f5f" stroke-width="1.300"/></svg>
<svg style="left:1238px;top:175px" width="14" height="14" viewBox="0 0 14 14"><circle cx="8.500" cy="5.500" r="3.700" fill="none" stroke="#666" stroke-width="1.400"/><path d="M6 8l-4.500 4.500" stroke="#666" stroke-width="1.800"/></svg>
<div style="left:70px;top:608px;width:140px;height:24px;background:#d9d9d9;"></div>
<svg style="left:128px;top:204px" width="13" height="16" viewBox="0 0 13 16"><path d="M.5 .5h11v15h-11z" fill="url(#fg)" stroke="#f3cd6a" stroke-width="1"/><path d="M10.500 9.500h2v6h-2z" fill="#ffe9a6" stroke="#ecbc44" stroke-width="1"/></svg>
<svg style="left:128px;top:228px" width="13" height="16" viewBox="0 0 13 16"><path d="M.5 .5h11v15h-11z" fill="url(#fg)" stroke="#f3cd6a" stroke-width="1"/><path d="M10.500 9.500h2v6h-2z" fill="#ffe9a6" stroke="#ecbc44" stroke-width="1"/></svg>
<svg style="left:128px;top:252px" width="13" height="16" viewBox="0 0 13 16"><path d="M.5 .5h11v15h-11z" fill="url(#fg)" stroke="#f3cd6a" stroke-width="1"/><path d="M10.500 9.500h2v6h-2z" fill="#ffe9a6" stroke="#ecbc44" stroke-width="1"/></svg>
<svg style="left:128px;top:276px" width="13" height="16" viewBox="0 0 13 16"><path d="M.5 .5h11v15h-11z" fill="url(#fg)" stroke="#f3cd6a" stroke-width="1"/><path d="M10.500 9.500h2v6h-2z" fill="#ffe9a6" stroke="#ecbc44" stroke-width="1"/></svg>
<svg style="left:128px;top:300px" width="13" height="16" viewBox="0 0 13 16"><path d="M.5 .5h11v15h-11z" fill="url(#fg)" stroke="#f3cd6a" stroke-width="1"/><path d="M10.500 9.500h2v6h-2z" fill="#ffe9a6" stroke="#ecbc44" stroke-width="1"/></svg>
<svg style="left:128px;top:324px" width="13" height="16" viewBox="0 0 13 16"><path d="M.5 .5h11v15h-11z" fill="url(#fg)" stroke="#f3cd6a" stroke-width="1"/><path d="M10.500 9.500h2v6h-2z" fill="#ffe9a6" stroke="#ecbc44" stroke-width="1"/></svg>
<svg style="left:128px;top:348px" width="13" height="16" viewBox="0 0 13 16"><path d="M.5 .5h11v15h-11z" fill="url(#fg)" stroke="#f3cd6a" stroke-width="1"/><path d="M10.500 9.500h2v6h-2z" fill="#ffe9a6" stroke="#ecbc44" stroke-width="1"/></svg>
<svg style="left:120px;top:372px" width="13" height="16" viewBox="0 0 13 16"><path d="M.5 .5h11v15h-11z" fill="url(#fg)" stroke="#f3cd6a" stroke-width="1"/><path d="M10.500 9.500h2v6h-2z" fill="#ffe9a6" stroke="#ecbc44" stroke-width="1"/></svg>
<svg style="left:120px;top:396px" width="13" height="16" viewBox="0 0 13 16"><path d="M.5 .5h11v15h-11z" fill="url(#fg)" stroke="#f3cd6a" stroke-width="1"/><path d="M10.500 9.500h2v6h-2z" fill="#ffe9a6" stroke="#ecbc44" stroke-width="1"/></svg>
<svg style="left:120px;top:420px" width="13" height="16" viewBox="0 0 13 16"><path d="M.5 .5h11v15h-11z" fill="url(#fg)" stroke="#f3cd6a" stroke-width="1"/><path d="M10.500 9.500h2v6h-2z" fill="#ffe9a6" stroke="#ecbc44" stroke-width="1"/></svg>
<svg style="left:120px;top:444px" width="13" height="16" viewBox="0 0 13 16"><path d="M.5 .5h11v15h-11z" fill="url(#fg)" stroke="#f3cd6a" stroke-width="1"/><path d="M10.500 9.500h2v6h-2z" fill="#ffe9a6" stroke="#ecbc44" stroke-width="1"/></svg>
<svg style="left:120px;top:468px" width="13" height="16" viewBox="0 0 13 16"><path d="M.5 .5h11v15h-11z" fill="url(#fg)" stroke="#f3cd6a" stroke-width="1"/><path d="M10.500 9.500h2v6h-2z" fill="#ffe9a6" stroke="#ecbc44" stroke-width="1"/></svg>
<svg style="left:120px;top:492px" width="13" height="16" viewBox="0 0 13 16"><path d="M.5 .5h11v15h-11z" fill="url(#fg)" stroke="#f3cd6a" stroke-width="1"/><path d="M10.500 9.500h2v6h-2z" fill="#ffe9a6" stroke="#ecbc44" stroke-width="1"/></svg>
<svg style="left:120px;top:516px" width="13" height="16" viewBox="0 0 13 16"><path d="M.5 .5h11v15h-11z" fill="url(#fg)" stroke="#f3cd6a" stroke-width="1"/><path d="M10.500 9.500h2v6h-2z" fill="#ffe9a6" stroke="#ecbc44" stroke-width="1"/></svg>
<svg style="left:120px;top:540px" width="13" height="16" viewBox="0 0 13 16"><path d="M.5 .5h11v15h-11z" fill="url(#fg)" stroke="#f3cd6a" stroke-width="1"/><path d="M10.500 9.500h2v6h-2z" fill="#ffe9a6" stroke="#ecbc44" stroke-width="1"/></svg>
<svg style="left:120px;top:564px" width="13" height="16" viewBox="0 0 13 16"><path d="M.5 .5h11v15h-11z" fill="url(#fg)" stroke="#f3cd6a" stroke-width="1"/><path d="M10.500 9.500h2v6h-2z" fill="#ffe9a6" stroke="#ecbc44" stroke-width="1"/></svg>
<svg style="left:120px;top:588px" width="13" height="16" viewBox="0 0 13 16"><path d="M.5 .5h11v15h-11z" fill="url(#fg)" stroke="#f3cd6a" stroke-width="1"/><path d="M10.500 9.500h2v6h-2z" fill="#ffe9a6" stroke="#ecbc44" stroke-width="1"/></svg>
<svg style="left:128px;top:612px" width="13" height="16" viewBox="0 0 13 16"><path d="M.5 .5h11v15h-11z" fill="url(#fg)" stroke="#f3cd6a" stroke-width="1"/><path d="M10.500 9.500h2v6h-2z" fill="#ffe9a6" stroke="#ecbc44" stroke-width="1"/></svg>
<svg style="left:136px;top:636px" width="13" height="16" viewBox="0 0 13 16"><path d="M.5 .5h11v15h-11z" fill="url(#fg)" stroke="#f3cd6a" stroke-width="1"/><path d="M10.500 9.500h2v6h-2z" fill="#ffe9a6" stroke="#ecbc44" stroke-width="1"/></svg>
<span class="t" style="left:179px;top:117.8px;font-size:12px;line-height:16px;color:#000;">android</span>
<span class="t" style="left:84px;top:144.8px;font-size:12px;line-height:16px;color:#fff;letter-spacing:-0.63px;">Файл</span>
<span class="t" style="left:140px;top:144.8px;font-size:12px;line-height:16px;color:#444;letter-spacing:-0.53px;">Главная</span>
<span class="t" style="left:211px;top:144.8px;font-size:12px;line-height:16px;color:#444;letter-spacing:-0.43px;">Поделиться</span>
<span class="t" style="left:302px;top:144.8px;font-size:12px;line-height:16px;color:#444;letter-spacing:-0.91px;">Вид</span>
<span class="t" style="left:215px;top:173.8px;font-size:12px;line-height:16px;color:#222;letter-spacing:0.09px;">Этот компьютер</span>
<span class="t" style="left:329px;top:173.8px;font-size:12px;line-height:16px;color:#222;letter-spacing:-0.52px;">OS (C:)</span>
<span class="t" style="left:389px;top:173.8px;font-size:12px;line-height:16px;color:#222;letter-spacing:-0.54px;">HTML_APK</span>
<span class="t" style="left:471px;top:173.8px;font-size:12px;line-height:16px;color:#222;">android</span>
<span class="t" style="left:1067px;top:173.8px;font-size:12px;line-height:16px;color:#6d6d6d;letter-spacing:0.02px;">Поиск в: android</span>
<span class="t" style="left:147px;top:203.8px;font-size:12px;line-height:16px;color:#000;">fpcsrc</span>
<span class="t" style="left:147px;top:227.8px;font-size:12px;line-height:16px;color:#000;letter-spacing:0.08px;">help</span>
<span class="t" style="left:147px;top:251.8px;font-size:12px;line-height:16px;color:#000;letter-spacing:-0.17px;">ScriptsLin</span>
<span class="t" style="left:147px;top:275.8px;font-size:12px;line-height:16px;color:#000;letter-spacing:-0.18px;">ScriptsWin</span>
<span class="t" style="left:147px;top:299.8px;font-size:12px;line-height:16px;color:#000;letter-spacing:-0.17px;">Settings</span>
<span class="t" style="left:147px;top:323.8px;font-size:12px;line-height:16px;color:#000;letter-spacing:0.24px;">typhon</span>
<span class="t" style="left:147px;top:347.8px;font-size:12px;line-height:16px;color:#000;letter-spacing:0.06px;">typhonTemp</span>
<span class="t" style="left:139px;top:371.8px;font-size:12px;line-height:16px;color:#000;letter-spacing:-0.08px;">CodeTyphonI</span>
<span class="t" style="left:139px;top:395.8px;font-size:12px;line-height:16px;color:#000;letter-spacing:0.15px;">customdrawn</span>
<span class="t" style="left:139px;top:419.8px;font-size:12px;line-height:16px;color:#000;letter-spacing:-0.28px;">Dos</span>
<span class="t" style="left:139px;top:443.8px;font-size:12px;line-height:16px;color:#000;letter-spacing:-0.4px;">DOSBox-X</span>
<span class="t" style="left:139px;top:467.8px;font-size:12px;line-height:16px;color:#000;letter-spacing:-0.96px;">EN.LPROJ</span>
<span class="t" style="left:139px;top:491.8px;font-size:12px;line-height:16px;color:#000;letter-spacing:-0.09px;">eSupport</span>
<span class="t" style="left:139px;top:515.8px;font-size:12px;line-height:16px;color:#000;letter-spacing:-0.27px;">ForCTForum</span>
<span class="t" style="left:139px;top:539.8px;font-size:12px;line-height:16px;color:#000;letter-spacing:0.33px;">fpc</span>
<span class="t" style="left:139px;top:563.8px;font-size:12px;line-height:16px;color:#000;letter-spacing:-1.09px;">GTK1</span>
<span class="t" style="left:139px;top:587.8px;font-size:12px;line-height:16px;color:#000;letter-spacing:-0.48px;">HTML_APK</span>
<span class="t" style="left:147px;top:611.8px;font-size:12px;line-height:16px;color:#000;letter-spacing:0.07px;">android</span>
<span class="t" style="left:155px;top:635.8px;font-size:12px;line-height:16px;color:#000;letter-spacing:-0.61px;">assets</span>
<div style="left:209px;top:200px;width:1px;height:452px;background:#fff;"></div>
<div style="left:210px;top:200px;width:16px;height:452px;background:#f0f0f0;"></div>
<div style="left:210px;top:473px;width:16px;height:51px;background:#cdcdcd;"></div>
<svg style="left:212px;top:204px" width="12" height="8" viewBox="0 0 12 8"><path d="M2 6.500l4-4 4 4" fill="none" stroke="#505050" stroke-width="1.800"/></svg>
<svg style="left:212px;top:640px" width="12" height="8" viewBox="0 0 12 8"><path d="M2 1.500l4 4 4-4" fill="none" stroke="#505050" stroke-width="1.800"/></svg>
<svg style="left:367px;top:199px" width="10" height="7" viewBox="0 0 10 7"><path d="M1 5.500l4-4 4 4" fill="none" stroke="#767676" stroke-width="1"/></svg>
<div style="left:501px;top:200px;width:1px;height:24px;background:#e5e5e5;"></div>
<div style="left:645px;top:200px;width:1px;height:24px;background:#e5e5e5;"></div>
<div style="left:765px;top:200px;width:1px;height:24px;background:#e5e5e5;"></div>
<div style="left:845px;top:200px;width:1px;height:24px;background:#e5e5e5;"></div>
<div style="left:995px;top:200px;width:1px;height:451px;background:#f0f0f0;"></div>
<div style="left:244px;top:231px;width:598px;height:22px;background:#cce8ff;border:1px solid #99d1ff;"></div>
<svg style="left:250px;top:233.0px" width="13" height="16" viewBox="0 0 13 16"><path d="M.5 .5h11v15h-11z" fill="url(#fg)" stroke="#f3cd6a" stroke-width="1"/><path d="M10.500 9.500h2v6h-2z" fill="#ffe9a6" stroke="#ecbc44" stroke-width="1"/></svg>
<svg style="left:250px;top:254.0px" width="13" height="16" viewBox="0 0 13 16"><path d="M.5 .5h11v15h-11z" fill="url(#fg)" stroke="#f3cd6a" stroke-width="1"/><path d="M10.500 9.500h2v6h-2z" fill="#ffe9a6" stroke="#ecbc44" stroke-width="1"/></svg>
<svg style="left:250px;top:275.0px" width="13" height="16" viewBox="0 0 13 16"><path d="M.5 .5h11v15h-11z" fill="url(#fg)" stroke="#f3cd6a" stroke-width="1"/><path d="M10.500 9.500h2v6h-2z" fill="#ffe9a6" stroke="#ecbc44" stroke-width="1"/></svg>
<svg style="left:250px;top:296.0px" width="13" height="16" viewBox="0 0 13 16"><path d="M.5 .5h11v15h-11z" fill="url(#fg)" stroke="#f3cd6a" stroke-width="1"/><path d="M10.500 9.500h2v6h-2z" fill="#ffe9a6" stroke="#ecbc44" stroke-width="1"/></svg>
<svg style="left:250px;top:317.0px" width="13" height="16" viewBox="0 0 13 16"><path d="M.5 .5h11v15h-11z" fill="url(#fg)" stroke="#f3cd6a" stroke-width="1"/><path d="M10.500 9.500h2v6h-2z" fill="#ffe9a6" stroke="#ecbc44" stroke-width="1"/></svg>
<svg style="left:250px;top:338.0px" width="13" height="16" viewBox="0 0 13 16"><path d="M.5 .5h11v15h-11z" fill="url(#fg)" stroke="#f3cd6a" stroke-width="1"/><path d="M10.500 9.500h2v6h-2z" fill="#ffe9a6" stroke="#ecbc44" stroke-width="1"/></svg>
<svg style="left:248px;top:359.0px" width="16" height="16" viewBox="0 0 16 16"><circle cx="8" cy="8" r="8" fill="url(#eg2)"/><path d="M.2 7a8 8 0 0 1 15.700 1.500q-.2 2.800-3.200 3q-3.500 0-3-2.200q.6-1.300-.5-2.500q-2-1.600-4.500-.6q-2.800 1.300-4.500 .8z" fill="url(#eg1)"/><path d="M9.600 9.200q-.6 2.300 3 2.300q2.200-.1 3.100-2q.2 2.200-1.700 3.300q-3 1.400-5.200-.4q-1.300-1.500 .8-3.200z" fill="#fff"/><path d="M5.200 7.200q3.500-1.500 4.600 1.600q-2 1.500-1.300 3.600q.6 1.700 3 2.200a8 8 0 0 1-6.500-.9q-2.600-2.600-1.300-5.500z" fill="#1a4f9c" opacity=".55"/></svg>
<svg style="left:250px;top:381.0px" width="12" height="15" viewBox="0 0 12 15"><path d="M.5 .5h7l3.500 3.500v10.500h-10.500z" fill="#fff" stroke="#aeaeae"/><path d="M7.500 .5v3.500h3.500" fill="none" stroke="#aeaeae"/><path d="M2.500 5.500h4M2.500 7.500h6M2.500 9.500h6M2.500 11.500h6" stroke="#cfcfcf"/></svg>
<svg style="left:250px;top:402.0px" width="12" height="15" viewBox="0 0 12 15"><path d="M.5 .5h7l3.500 3.500v10.500h-10.500z" fill="#fff" stroke="#aeaeae"/><path d="M7.500 .5v3.500h3.500" fill="none" stroke="#aeaeae"/><path d="M2.500 5.500h4M2.500 7.500h6M2.500 9.500h6M2.500 11.500h6" stroke="#cfcfcf"/></svg>
<svg style="left:248px;top:422.0px" width="16" height="16" viewBox="0 0 16 16"><circle cx="8" cy="8" r="8" fill="url(#eg2)"/><path d="M.2 7a8 8 0 0 1 15.700 1.500q-.2 2.800-3.200 3q-3.500 0-3-2.200q.6-1.300-.5-2.500q-2-1.600-4.500-.6q-2.800 1.300-4.500 .8z" fill="url(#eg1)"/><path d="M9.600 9.200q-.6 2.300 3 2.300q2.200-.1 3.100-2q.2 2.200-1.700 3.300q-3 1.400-5.200-.4q-1.300-1.500 .8-3.200z" fill="#fff"/><path d="M5.200 7.200q3.500-1.500 4.600 1.600q-2 1.500-1.300 3.600q.6 1.700 3 2.200a8 8 0 0 1-6.500-.9q-2.600-2.600-1.300-5.500z" fill="#1a4f9c" opacity=".55"/></svg>
<svg style="left:250px;top:444.0px" width="12" height="15" viewBox="0 0 12 15"><path d="M.5 .5h7l3.500 3.500v10.500h-10.500z" fill="#fff" stroke="#aeaeae"/><path d="M7.500 .5v3.500h3.500" fill="none" stroke="#aeaeae"/><path d="M2.500 5.500h4M2.500 7.500h6M2.500 9.500h6M2.500 11.500h6" stroke="#cfcfcf"/></svg>
<svg style="left:250px;top:465.0px" width="12" height="15" viewBox="0 0 12 15"><path d="M.5 .5h7l3.500 3.500v10.500h-10.500z" fill="#fff" stroke="#aeaeae"/><path d="M7.500 .5v3.500h3.500" fill="none" stroke="#aeaeae"/><path d="M2.500 5.500h4M2.500 7.500h6M2.500 9.500h6M2.500 11.500h6" stroke="#cfcfcf"/></svg>
<div style="left:171px;top:660px;width:1px;height:11px;background:#e2e2e2;"></div>
<div style="left:295px;top:660px;width:1px;height:11px;background:#e2e2e2;"></div>
<div style="left:1223px;top:653px;width:22px;height:23px;background:#cce8f6;border:1px solid #1c97d8;"></div>
<svg style="left:1226px;top:657px" width="18" height="15" viewBox="1226 657 18 15"><rect x="1227.500" y="658.500" width="4" height="12" fill="#fff" stroke="#8a8a8a"/><path d="M1227.500 662.500h4M1227.500 666.500h4" stroke="#8a8a8a"/><rect x="1229" y="660" width="1" height="1" fill="#2a8a4a"/><rect x="1229" y="664" width="1" height="1" fill="#3a7ae8"/><rect x="1229" y="668" width="1" height="1" fill="#e02020"/><path d="M1233 660.500h4M1239 660.500h4M1233 664.500h4M1239 664.500h4M1233 668.500h4M1239 668.500h4" stroke="#767676" stroke-width="1.200"/></svg>
<svg style="left:1249px;top:658px" width="14" height="11" viewBox="0 0 14 11"><defs><linearGradient id="pic" x1="0" y1="0" x2="0" y2="1"><stop offset="0" stop-color="#4a90f0"/><stop offset=".5" stop-color="#9cc4f0"/><stop offset="1" stop-color="#1f5fa8"/></linearGradient></defs><rect x=".5" y=".5" width="13" height="10" fill="#fff" stroke="#8a8a8a"/><rect x="2" y="2" width="10" height="7" fill="url(#pic)"/><path d="M2 5q3-2 6 1.500l4 1v1.500h-10z" fill="#2a6a3a" opacity=".8"/></svg>
<span class="t" style="left:247px;top:204.8px;font-size:12px;line-height:16px;color:#4c607a;letter-spacing:0.21px;">Имя</span>
<span class="t" style="left:508px;top:204.8px;font-size:12px;line-height:16px;color:#4c607a;letter-spacing:-0.16px;">Дата изменения</span>
<span class="t" style="left:652px;top:204.8px;font-size:12px;line-height:16px;color:#4c607a;letter-spacing:-0.01px;">Тип</span>
<span class="t" style="left:772px;top:204.8px;font-size:12px;line-height:16px;color:#4c607a;letter-spacing:-0.21px;">Размер</span>
<span class="t" style="left:268px;top:233.8px;font-size:12px;line-height:16px;color:#000;letter-spacing:-0.7px;">assets</span>
<span class="t" style="left:508px;top:233.8px;font-size:12px;line-height:16px;color:#6d6d6d;letter-spacing:-0.53px;">30.01.2026 11:19</span>
<span class="t" style="left:652px;top:233.8px;font-size:12px;line-height:16px;color:#6d6d6d;letter-spacing:-0.1px;">Папка с файлами</span>
<span class="t" style="left:268px;top:254.8px;font-size:12px;line-height:16px;color:#000;letter-spacing:0.49px;">bin</span>
<span class="t" style="left:508px;top:254.8px;font-size:12px;line-height:16px;color:#6d6d6d;letter-spacing:-0.53px;">30.01.2026 11:21</span>
<span class="t" style="left:652px;top:254.8px;font-size:12px;line-height:16px;color:#6d6d6d;letter-spacing:-0.1px;">Папка с файлами</span>
<span class="t" style="left:268px;top:275.8px;font-size:12px;line-height:16px;color:#000;letter-spacing:-0.01px;">gen</span>
<span class="t" style="left:508px;top:275.8px;font-size:12px;line-height:16px;color:#6d6d6d;letter-spacing:-0.53px;">30.01.2026 11:21</span>
<span class="t" style="left:652px;top:275.8px;font-size:12px;line-height:16px;color:#6d6d6d;letter-spacing:-0.1px;">Папка с файлами</span>
<span class="t" style="left:268px;top:296.8px;font-size:12px;line-height:16px;color:#000;letter-spacing:0.12px;">libs</span>
<span class="t" style="left:508px;top:296.8px;font-size:12px;line-height:16px;color:#6d6d6d;letter-spacing:-0.53px;">30.01.2026 11:21</span>
<span class="t" style="left:652px;top:296.8px;font-size:12px;line-height:16px;color:#6d6d6d;letter-spacing:-0.1px;">Папка с файлами</span>
<span class="t" style="left:268px;top:317.8px;font-size:12px;line-height:16px;color:#000;letter-spacing:-0.39px;">res</span>
<span class="t" style="left:508px;top:317.8px;font-size:12px;line-height:16px;color:#6d6d6d;letter-spacing:-0.59px;">29.01.2026 18:47</span>
<span class="t" style="left:652px;top:317.8px;font-size:12px;line-height:16px;color:#6d6d6d;letter-spacing:-0.1px;">Папка с файлами</span>
<span class="t" style="left:268px;top:338.8px;font-size:12px;line-height:16px;color:#000;letter-spacing:-0.5px;">src</span>
<span class="t" style="left:508px;top:338.8px;font-size:12px;line-height:16px;color:#6d6d6d;letter-spacing:-0.59px;">29.01.2026 19:40</span>
<span class="t" style="left:652px;top:338.8px;font-size:12px;line-height:16px;color:#6d6d6d;letter-spacing:-0.1px;">Папка с файлами</span>
<span class="t" style="left:268px;top:359.8px;font-size:12px;line-height:16px;color:#000;letter-spacing:0.17px;">AndroidManifest.xml</span>
<span class="t" style="left:508px;top:359.8px;font-size:12px;line-height:16px;color:#6d6d6d;letter-spacing:-0.59px;">29.01.2026 18:44</span>
<span class="t" style="left:652px;top:359.8px;font-size:12px;line-height:16px;color:#6d6d6d;letter-spacing:-0.06px;">Microsoft Edge H...</span>
<span class="t" style="left:814px;top:359.8px;font-size:12px;line-height:16px;color:#6d6d6d;letter-spacing:-0.22px;">1 КБ</span>
<span class="t" style="left:268px;top:380.8px;font-size:12px;line-height:16px;color:#000;letter-spacing:0.08px;">build.gradle</span>
<span class="t" style="left:508px;top:380.8px;font-size:12px;line-height:16px;color:#6d6d6d;letter-spacing:-0.59px;">29.01.2026 12:42</span>
<span class="t" style="left:652px;top:380.8px;font-size:12px;line-height:16px;color:#6d6d6d;letter-spacing:-0.1px;">Исходный файл ...</span>
<span class="t" style="left:814px;top:380.8px;font-size:12px;line-height:16px;color:#6d6d6d;letter-spacing:-0.22px;">1 КБ</span>
<span class="t" style="left:268px;top:401.8px;font-size:12px;line-height:16px;color:#000;letter-spacing:0.06px;">build.properties</span>
<span class="t" style="left:508px;top:401.8px;font-size:12px;line-height:16px;color:#6d6d6d;letter-spacing:-0.48px;">28.11.2011 19:16</span>
<span class="t" style="left:652px;top:401.8px;font-size:12px;line-height:16px;color:#6d6d6d;letter-spacing:-0.1px;">Исходный файл ...</span>
<span class="t" style="left:814px;top:401.8px;font-size:12px;line-height:16px;color:#6d6d6d;letter-spacing:-0.22px;">1 КБ</span>
<span class="t" style="left:268px;top:422.8px;font-size:12px;line-height:16px;color:#000;letter-spacing:0.24px;">build.xml</span>
<span class="t" style="left:508px;top:422.8px;font-size:12px;line-height:16px;color:#6d6d6d;letter-spacing:-0.59px;">30.01.2026 10:48</span>
<span class="t" style="left:652px;top:422.8px;font-size:12px;line-height:16px;color:#6d6d6d;letter-spacing:-0.06px;">Microsoft Edge H...</span>
<span class="t" style="left:814px;top:422.8px;font-size:12px;line-height:16px;color:#6d6d6d;letter-spacing:-0.22px;">4 КБ</span>
<span class="t" style="left:268px;top:443.8px;font-size:12px;line-height:16px;color:#000;letter-spacing:-0.01px;">default.properties</span>
<span class="t" style="left:508px;top:443.8px;font-size:12px;line-height:16px;color:#6d6d6d;letter-spacing:-0.59px;">30.01.2026 10:49</span>
<span class="t" style="left:652px;top:443.8px;font-size:12px;line-height:16px;color:#6d6d6d;letter-spacing:-0.1px;">Исходный файл ...</span>
<span class="t" style="left:814px;top:443.8px;font-size:12px;line-height:16px;color:#6d6d6d;letter-spacing:-0.22px;">1 КБ</span>
<span class="t" style="left:268px;top:464.8px;font-size:12px;line-height:16px;color:#000;letter-spacing:-0.05px;">local.properties</span>
<span class="t" style="left:508px;top:464.8px;font-size:12px;line-height:16px;color:#6d6d6d;letter-spacing:-0.59px;">15.01.2026 17:36</span>
<span class="t" style="left:652px;top:464.8px;font-size:12px;line-height:16px;color:#6d6d6d;letter-spacing:-0.1px;">Исходный файл ...</span>
<span class="t" style="left:814px;top:464.8px;font-size:12px;line-height:16px;color:#6d6d6d;letter-spacing:-0.22px;">1 КБ</span>
<span class="t" style="left:1005px;top:418.8px;font-size:12px;line-height:16px;color:#6d6d6d;letter-spacing:-0.06px;">Нет данных для предварительного просмотра.</span>
<span class="t" style="left:84px;top:656.8px;font-size:12px;line-height:16px;color:#222;letter-spacing:-0.45px;">Элементов: 12</span>
<span class="t" style="left:183px;top:656.8px;font-size:12px;line-height:16px;color:#222;letter-spacing:-0.15px;">Выбран 1 элемент</span>
<svg style="left:295px;top:232px" width="85" height="48" viewBox="295 232 85 48"><path d="M302.1 243.7L320.9 238.6L316.2 246L371.3 273.5L312.7 253.6L311.5 261.8Z" fill="#d15044"/></svg>
<div style="left:1319px;top:65px;width:70px;height:47px;background:#fff;border-radius:23.500px;box-shadow:0 2px 12px rgba(0,0,0,.16);"></div>
<svg style="left:1326px;top:68px" width="40" height="38" viewBox="1326 68 40 38"><defs><linearGradient id="cb" x1="0" y1="0" x2="0" y2="1"><stop offset="0" stop-color="#173f9c"/><stop offset=".5" stop-color="#1b64c4"/><stop offset="1" stop-color="#2fa0e4"/></linearGradient><linearGradient id="cw" x1="0" y1="0" x2="0" y2="1"><stop offset="0" stop-color="#9fc0ec"/><stop offset=".35" stop-color="#d5e6f8"/><stop offset=".7" stop-color="#ffffff"/></linearGradient></defs><path d="M1342 76.300a11.600 11.600 0 1 1-4.800 22.200l-5.200 3 2-4.800a11.600 11.600 0 0 1 8-20.400z" fill="url(#cw)" stroke="url(#cb)" stroke-width="1.400"/><path d="M1331.500 84.500q4-6 10.500-5.500q6 .5 9 5.500q1.500 3-.5 6q-1.500-5-5.500-6.500q-6-2-13.500 .5z" fill="#1a55b4"/><path d="M1345 83.500q3.500 1.500 4 6.500l-2.500 1.500q-.5-4.500-3.500-6.500z" fill="#fff"/><ellipse cx="1337.800" cy="89.200" rx="4.200" ry="2.300" fill="#1a66c4"/><circle cx="1354" cy="79" r="8.900" fill="#f65d4d"/><text x="1354" y="83.500" font-size="13" font-family="Liberation Sans, sans-serif" fill="#fff" text-anchor="middle">1</text></svg>
</body></html>
